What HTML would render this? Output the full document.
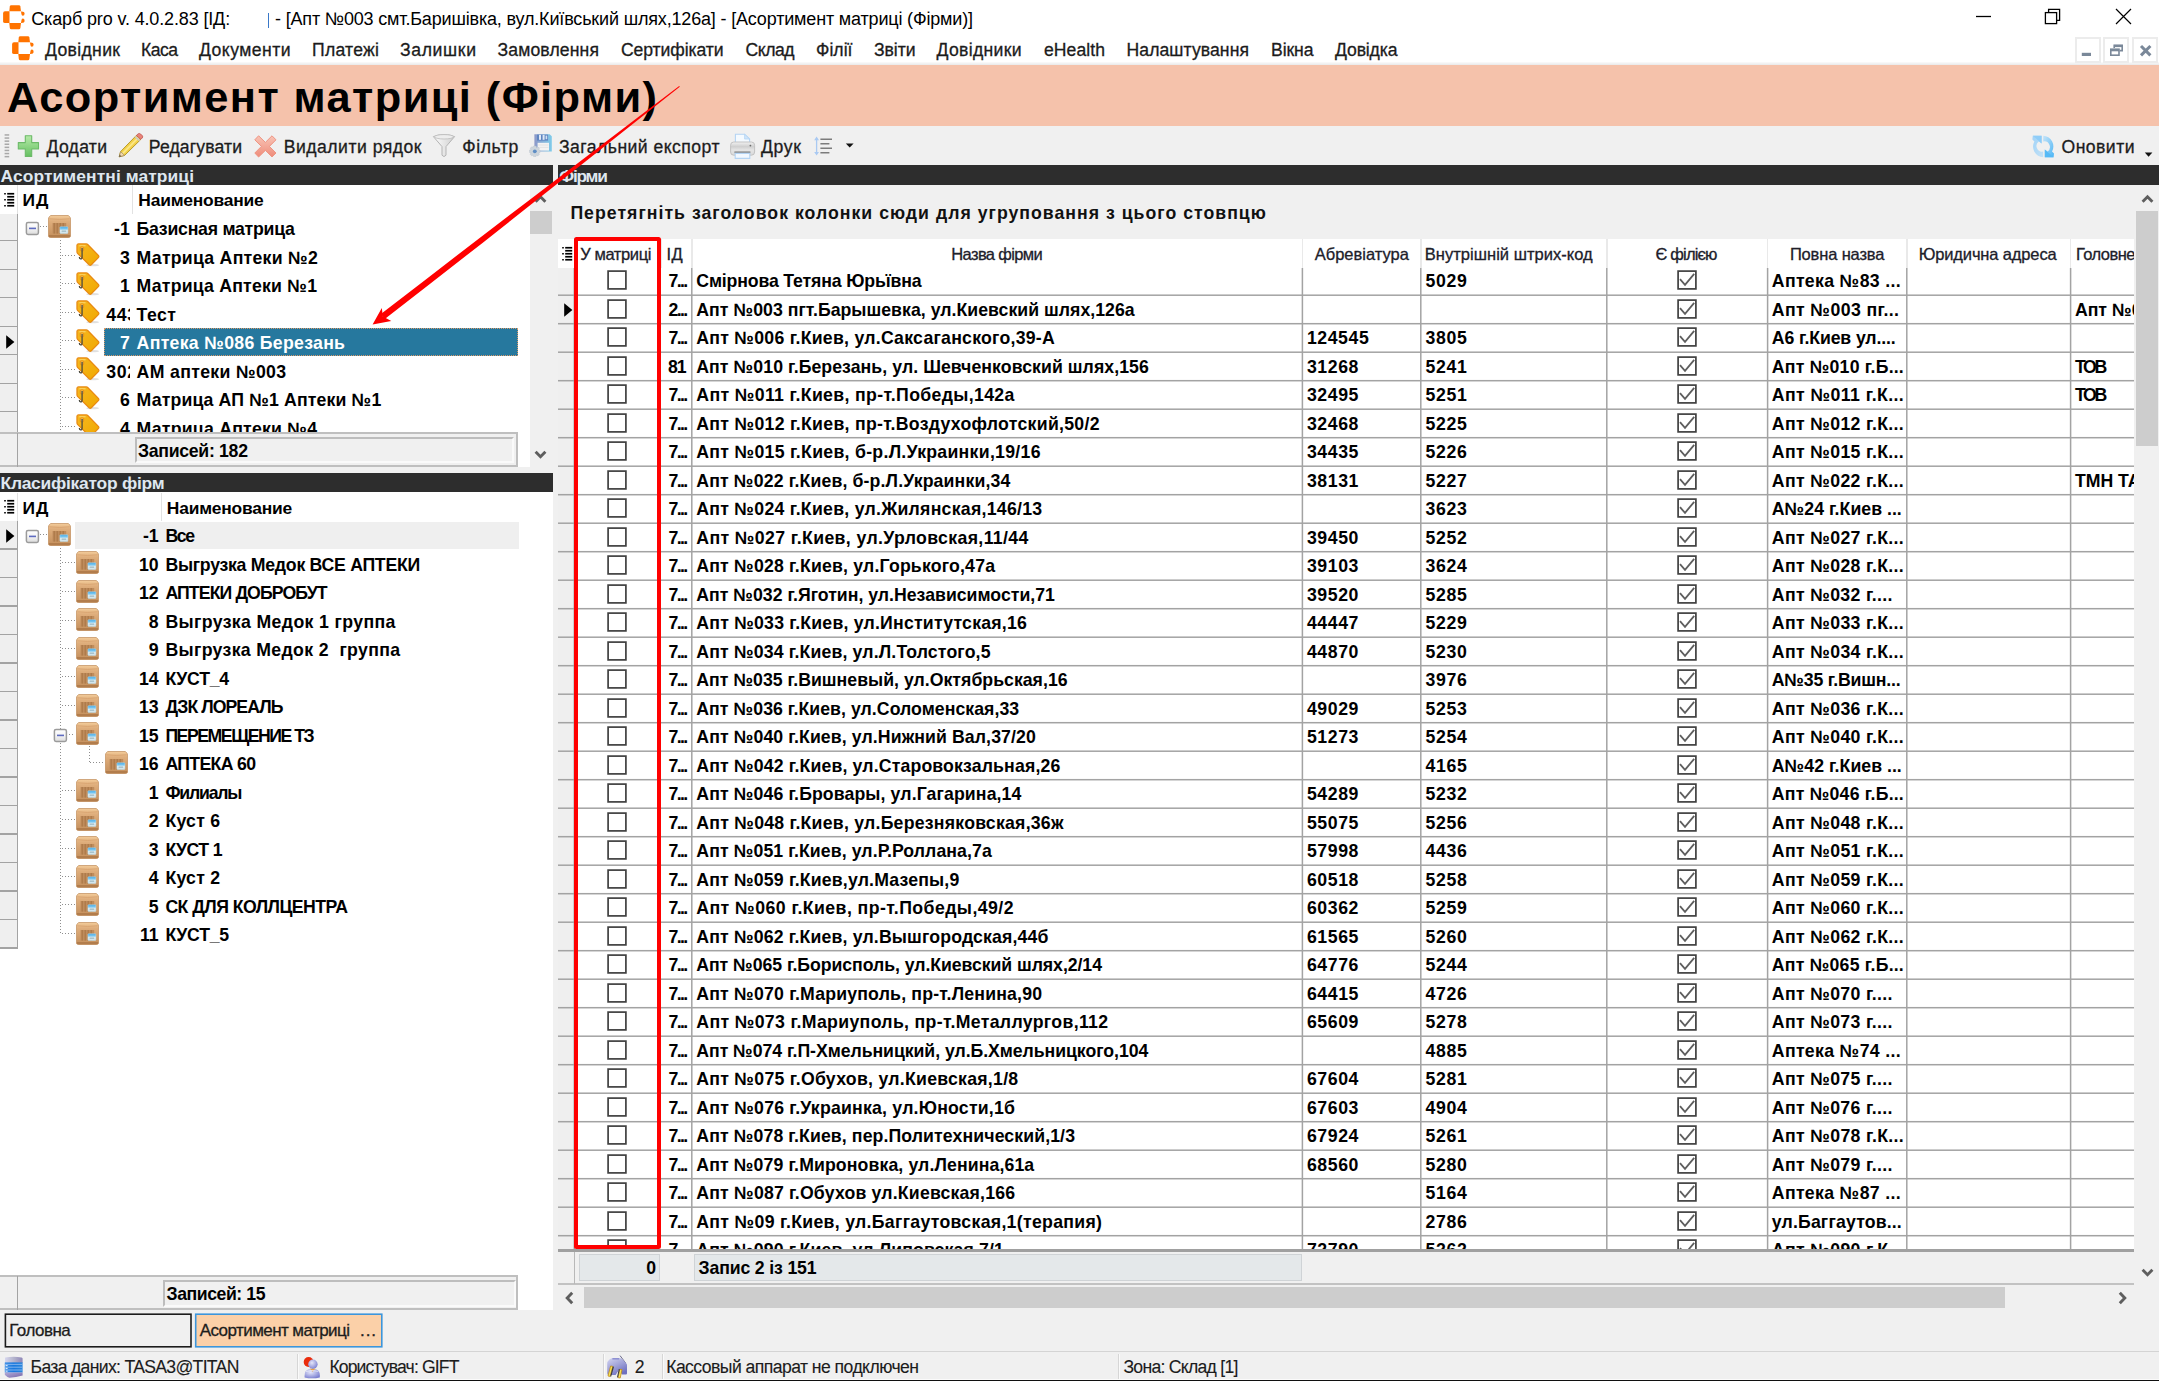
<!DOCTYPE html>
<html><head><meta charset="utf-8"><title>Скарб pro</title><style>
html,body{margin:0;padding:0;}
body{width:2159px;height:1381px;position:relative;overflow:hidden;background:#f0f0f0;font-family:"Liberation Sans",sans-serif;}
div,span,svg{position:absolute;box-sizing:border-box;}
span{white-space:pre;}
</style></head><body>
<div style="left:0.00px;top:0.00px;width:2159.00px;height:36.00px;background:#fff;"></div>
<svg style="left:3.1px;top:4.5px" width="22" height="25" viewBox="0 0 22 25"><g fill="#ff7300"><path d="M8.2 0.3 H15.9 Q17.2 0.3 17.4 1.6 L18 6.3 H6.3 L6.8 1.6 Q7 0.3 8.2 0.3 Z"/><path d="M2 6.3 H6.5 V18.1 H2 Q0.1 18.1 0.1 16.2 V8.2 Q0.1 6.3 2 6.3 Z"/><path d="M6.3 18.1 H18 L17.4 22.9 Q17.2 24.3 15.9 24.3 H8.2 Q7 24.3 6.8 22.9 Z"/><path d="M18 6.4 Q21.6 6.2 21.6 8.6 Q21.6 10.8 19.8 10.8 Q18.6 10.6 18.4 9 Z"/><path d="M18 18 Q21.6 18.2 21.6 15.8 Q21.6 13.6 19.8 13.6 Q18.6 13.8 18.4 15.4 Z"/></g></svg>
<span style="top:10.00px;font-size:18px;line-height:18px;color:#000;letter-spacing:-0.142px;left:31.20px;">Скарб pro v. 4.0.2.83 [ІД:</span>
<div style="left:268.00px;top:13.00px;width:1.20px;height:15.00px;background:#3a78c8;"></div>
<span style="top:10.00px;font-size:18px;line-height:18px;color:#000;letter-spacing:-0.171px;left:275.00px;">- [Апт №003 смт.Баришівка, вул.Київський шлях,126а] - [Асортимент матриці (Фірми)]</span>
<svg style="left:1970px;top:4px" width="170" height="26" viewBox="1970 4 170 26" fill="none" stroke="#000" stroke-width="1.3"><path d="M1976 16.5 H1991"/><path d="M2048.6 12.4 V9.4 H2059.6 V20.4 H2056.8"/><rect x="2045.4" y="12.6" width="11.2" height="11"/><path d="M2116 9 L2131 24 M2131 9 L2116 24" stroke-width="1.2"/></svg>
<div style="left:0.00px;top:36.00px;width:2159.00px;height:26.00px;background:#fff;"></div>
<div style="left:0.00px;top:61.50px;width:2159.00px;height:3.50px;background:linear-gradient(#fbfbfb,#e9e9e9);"></div>
<svg style="left:11.7px;top:36.1px" width="22" height="25" viewBox="0 0 22 25"><g fill="#ff7300"><path d="M8.2 0.3 H15.9 Q17.2 0.3 17.4 1.6 L18 6.3 H6.3 L6.8 1.6 Q7 0.3 8.2 0.3 Z"/><path d="M2 6.3 H6.5 V18.1 H2 Q0.1 18.1 0.1 16.2 V8.2 Q0.1 6.3 2 6.3 Z"/><path d="M6.3 18.1 H18 L17.4 22.9 Q17.2 24.3 15.9 24.3 H8.2 Q7 24.3 6.8 22.9 Z"/><path d="M18 6.4 Q21.6 6.2 21.6 8.6 Q21.6 10.8 19.8 10.8 Q18.6 10.6 18.4 9 Z"/><path d="M18 18 Q21.6 18.2 21.6 15.8 Q21.6 13.6 19.8 13.6 Q18.6 13.8 18.4 15.4 Z"/></g></svg>
<span style="top:42.00px;font-size:17.6px;line-height:17.6px;color:#1c1c1c;-webkit-text-stroke:0.3px #1c1c1c;letter-spacing:0.333px;left:45.00px;">Довідник</span>
<span style="top:42.00px;font-size:17.6px;line-height:17.6px;color:#1c1c1c;-webkit-text-stroke:0.3px #1c1c1c;letter-spacing:-0.542px;left:141.00px;">Каса</span>
<span style="top:42.00px;font-size:17.6px;line-height:17.6px;color:#1c1c1c;-webkit-text-stroke:0.3px #1c1c1c;letter-spacing:0.453px;left:199.00px;">Документи</span>
<span style="top:42.00px;font-size:17.6px;line-height:17.6px;color:#1c1c1c;-webkit-text-stroke:0.3px #1c1c1c;letter-spacing:0.260px;left:312.00px;">Платежі</span>
<span style="top:42.00px;font-size:17.6px;line-height:17.6px;color:#1c1c1c;-webkit-text-stroke:0.3px #1c1c1c;letter-spacing:0.641px;left:400.00px;">Залишки</span>
<span style="top:42.00px;font-size:17.6px;line-height:17.6px;color:#1c1c1c;-webkit-text-stroke:0.3px #1c1c1c;letter-spacing:0.139px;left:497.50px;">Замовлення</span>
<span style="top:42.00px;font-size:17.6px;line-height:17.6px;color:#1c1c1c;-webkit-text-stroke:0.3px #1c1c1c;letter-spacing:-0.103px;left:621.00px;">Сертифікати</span>
<span style="top:42.00px;font-size:17.6px;line-height:17.6px;color:#1c1c1c;-webkit-text-stroke:0.3px #1c1c1c;letter-spacing:-0.480px;left:745.50px;">Склад</span>
<span style="top:42.00px;font-size:17.6px;line-height:17.6px;color:#1c1c1c;-webkit-text-stroke:0.3px #1c1c1c;letter-spacing:0.035px;left:816.00px;">Філії</span>
<span style="top:42.00px;font-size:17.6px;line-height:17.6px;color:#1c1c1c;-webkit-text-stroke:0.3px #1c1c1c;letter-spacing:-0.070px;left:874.00px;">Звіти</span>
<span style="top:42.00px;font-size:17.6px;line-height:17.6px;color:#1c1c1c;-webkit-text-stroke:0.3px #1c1c1c;letter-spacing:0.312px;left:936.50px;">Довідники</span>
<span style="top:42.00px;font-size:17.6px;line-height:17.6px;color:#1c1c1c;-webkit-text-stroke:0.3px #1c1c1c;letter-spacing:0.057px;left:1044.00px;">eHealth</span>
<span style="top:42.00px;font-size:17.6px;line-height:17.6px;color:#1c1c1c;-webkit-text-stroke:0.3px #1c1c1c;letter-spacing:0.081px;left:1126.50px;">Налаштування</span>
<span style="top:42.00px;font-size:17.6px;line-height:17.6px;color:#1c1c1c;-webkit-text-stroke:0.3px #1c1c1c;letter-spacing:-0.086px;left:1271.00px;">Вікна</span>
<span style="top:42.00px;font-size:17.6px;line-height:17.6px;color:#1c1c1c;-webkit-text-stroke:0.3px #1c1c1c;letter-spacing:-0.133px;left:1335.00px;">Довідка</span>
<div style="left:2074.70px;top:37.00px;width:26.00px;height:26.00px;background:#fff;border:2px solid #ececec;"></div>
<div style="left:2103.20px;top:37.00px;width:26.00px;height:26.00px;background:#fff;border:2px solid #ececec;"></div>
<div style="left:2131.70px;top:37.00px;width:26.00px;height:26.00px;background:#fff;border:2px solid #ececec;"></div>
<svg style="left:2074px;top:36px" width="85" height="28" viewBox="2074 36 85 28"><rect x="2081.8" y="52.8" width="9.2" height="3.2" fill="#7a8899"/><g fill="none" stroke="#7a8899" stroke-width="1.6"><path d="M2114.2 48 V45.2 H2122.2 V50.6 H2119.8"/><path d="M2114 46 H2122.4" stroke-width="2.2"/><rect x="2110.8" y="49.2" width="8.2" height="6"/><path d="M2110.6 50.2 H2119.2" stroke-width="2.2"/></g><path d="M2141 46 L2150.4 55.4 M2150.4 46 L2141 55.4" stroke="#7a8899" stroke-width="3" fill="none"/></svg>
<div style="left:0.00px;top:65.00px;width:2159.00px;height:61.30px;background:#f5c2ab;"></div>
<span style="top:76.00px;font-size:43.4px;line-height:43.4px;color:#000;font-weight:bold;letter-spacing:1.417px;left:7.00px;">Асортимент матриці (Фірми)</span>
<div style="left:0.00px;top:126.30px;width:2159.00px;height:39.00px;background:#f0f0f0;"></div>
<svg style="left:4px;top:133px" width="7" height="26" viewBox="0 0 7 26" fill="#a8a8a8"><rect x="0.6" y="1.20" width="4.6" height="1.5"/><rect x="0.6" y="4.30" width="4.6" height="1.5"/><rect x="0.6" y="7.40" width="4.6" height="1.5"/><rect x="0.6" y="10.50" width="4.6" height="1.5"/><rect x="0.6" y="13.60" width="4.6" height="1.5"/><rect x="0.6" y="16.70" width="4.6" height="1.5"/><rect x="0.6" y="19.80" width="4.6" height="1.5"/><rect x="0.6" y="22.90" width="4.6" height="1.5"/></svg>
<span style="top:139.00px;font-size:17.6px;line-height:17.6px;color:#1c1c1c;-webkit-text-stroke:0.3px #1c1c1c;letter-spacing:0.287px;left:46.50px;">Додати</span>
<span style="top:139.00px;font-size:17.6px;line-height:17.6px;color:#1c1c1c;-webkit-text-stroke:0.3px #1c1c1c;letter-spacing:0.126px;left:148.80px;">Редагувати</span>
<span style="top:139.00px;font-size:17.6px;line-height:17.6px;color:#1c1c1c;-webkit-text-stroke:0.3px #1c1c1c;letter-spacing:0.497px;left:283.70px;">Видалити рядок</span>
<span style="top:139.00px;font-size:17.6px;line-height:17.6px;color:#1c1c1c;-webkit-text-stroke:0.3px #1c1c1c;letter-spacing:0.562px;left:462.30px;">Фільтр</span>
<span style="top:139.00px;font-size:17.6px;line-height:17.6px;color:#1c1c1c;-webkit-text-stroke:0.3px #1c1c1c;letter-spacing:0.458px;left:559.00px;">Загальний експорт</span>
<span style="top:139.00px;font-size:17.6px;line-height:17.6px;color:#1c1c1c;-webkit-text-stroke:0.3px #1c1c1c;letter-spacing:0.667px;left:761.00px;">Друк</span>
<span style="top:139.00px;font-size:17.6px;line-height:17.6px;color:#1c1c1c;-webkit-text-stroke:0.3px #1c1c1c;letter-spacing:0.458px;left:2061.50px;">Оновити</span>
<svg style="left:17px;top:134px" width="24" height="24" viewBox="0 0 24 24"><defs><linearGradient id="gp" x1="0" y1="0" x2="0" y2="1"><stop offset="0" stop-color="#b6eaa8"/><stop offset="1" stop-color="#66c062"/></linearGradient></defs><path d="M8.3 1.8 H14.7 V8.6 H21.5 V15 H14.7 V22.4 H8.3 V15 H1.3 V8.6 H8.3 Z" fill="url(#gp)" stroke="#6cba68" stroke-width="1.1" stroke-linejoin="round"/></svg>
<svg style="left:117px;top:132px" width="28" height="28" viewBox="0 0 28 28"><path d="M2.2 24.8 L3.6 19.6 L19.4 3.4 L23.8 7.4 L7.6 23.4 Z" fill="#f3d24a" stroke="#b89a2a" stroke-width="1"/><path d="M5.5 21.6 L21.6 5.4" stroke="#fbe88a" stroke-width="1.6"/><path d="M19.4 3.4 L21.2 1.8 Q22.4 1 23.6 2 L25.4 3.8 Q26.2 5 25.2 6 L23.8 7.4 Z" fill="#e9837a" stroke="#c0554e" stroke-width="0.8"/><path d="M18.2 4.6 L22.6 8.6" stroke="#c9c9c9" stroke-width="1.6"/><path d="M2.2 24.8 L3.6 19.6 L7.6 23.4 Z" fill="#f2d9b0" stroke="#a08858" stroke-width="0.7"/><path d="M2.2 24.8 L2.8 22.8 L4.2 24.2 Z" fill="#444"/></svg>
<svg style="left:253px;top:134px" width="25" height="25" viewBox="0 0 25 25"><defs><linearGradient id="gx" x1="0" y1="0" x2="0" y2="1"><stop offset="0" stop-color="#f9c4b6"/><stop offset="1" stop-color="#ee8c7a"/></linearGradient></defs><path d="M5.6 1.8 L12.4 8.4 L19 1.8 L23 5.8 L16.4 12.4 L23 19 L19 23 L12.4 16.4 L5.6 23 L1.8 19 L8.4 12.4 L1.8 5.8 Z" fill="url(#gx)" stroke="#ee9482" stroke-width="1" stroke-linejoin="round"/></svg>
<svg style="left:432px;top:133px" width="24" height="26" viewBox="0 0 24 26"><defs><linearGradient id="gf" x1="0" y1="0" x2="1" y2="0"><stop offset="0" stop-color="#fdfdfd"/><stop offset="1" stop-color="#cfcfcf"/></linearGradient></defs><path d="M1.4 3.6 Q12 -0.6 22.6 3.6 L14 13.6 V22.2 Q12 25 10 22.2 V13.6 Z" fill="url(#gf)" stroke="#b4b4b4" stroke-width="1"/><ellipse cx="12" cy="3.8" rx="9.6" ry="2.2" fill="#ededed" stroke="#bdbdbd" stroke-width="0.8"/></svg>
<svg style="left:529px;top:133px" width="25" height="26" viewBox="0 0 25 26"><defs><linearGradient id="fl1" x1="0" y1="0" x2="1" y2="0"><stop offset="0" stop-color="#8c98c8"/><stop offset="1" stop-color="#7fcbea"/></linearGradient></defs><path d="M5.4 1.2 H20.6 L22.8 3.2 V18.6 H5.4 Z" fill="url(#fl1)"/><rect x="8" y="1.6" width="11" height="6" fill="#5f84c0"/><rect x="10" y="1.8" width="2" height="5" fill="#dfe9f6"/><rect x="13.6" y="1.8" width="2" height="5" fill="#dfe9f6"/><rect x="16.6" y="2.6" width="1.6" height="3.6" fill="#cfe0f2"/><rect x="8.6" y="9.8" width="11.4" height="7.8" fill="#f3f3f3"/><path d="M9 12 H19.4 M9 14.4 H19.4" stroke="#dedede" stroke-width="0.8"/><g transform="translate(5.8 18.3)"><path d="M-1.3 -5.2 H1.3 L1.7 -3.6 L3.1 -4.4 L4.6 -2.9 L3.7 -1.6 L5.2 -1.2 V1.3 L3.7 1.7 L4.5 3.1 L3 4.6 L1.6 3.7 L1.2 5.2 H-1.3 L-1.7 3.7 L-3.1 4.5 L-4.6 3 L-3.7 1.6 L-5.2 1.2 V-1.3 L-3.7 -1.7 L-4.5 -3.1 L-3 -4.6 L-1.6 -3.7 Z" fill="#cdd5dc" stroke="#b8c2cc" stroke-width="0.5"/><circle r="1.9" fill="#5f8ec4"/></g></svg>
<svg style="left:729px;top:133px" width="27" height="27" viewBox="0 0 27 27"><defs><linearGradient id="pr1" x1="0" y1="0" x2="0" y2="1"><stop offset="0" stop-color="#f2f2f2"/><stop offset="0.35" stop-color="#cfcfcf"/><stop offset="0.6" stop-color="#e4e4e4"/><stop offset="1" stop-color="#dadada"/></linearGradient></defs><path d="M6.4 1.2 H15.6 L20.6 6 V11 H6.4 Z" fill="#f4faff" stroke="#b4d4f4" stroke-width="1.1"/><path d="M15.6 1.2 V6 H20.6 Z" fill="#cfe4fa" stroke="#b4d4f4" stroke-width="0.8"/><rect x="1.6" y="9" width="24" height="13.2" rx="3.2" fill="url(#pr1)" stroke="#c2c2c2" stroke-width="1"/><rect x="5.4" y="18.4" width="16" height="1.8" fill="#8a8a8a"/><circle cx="21.4" cy="12.6" r="0.9" fill="#6c6c6c"/><path d="M6.2 20.4 H20.8 V25.4 H6.2 Z" fill="#f2f8ff" stroke="#b4d4f4" stroke-width="1.1"/></svg>
<svg style="left:812px;top:135px" width="22" height="22" viewBox="0 0 22 22"><path d="M4.6 3 V19" stroke="#a9c9f2" stroke-width="1.3" fill="none"/><path d="M2.2 5.2 L4.6 1.6 L7 5.2 Z M2.2 17 L4.6 20.6 L7 17 Z" fill="#a9c9f2"/><path d="M8.4 4.2 H20 M8.4 8.7 H17.4 M8.4 13.2 H20 M8.4 17.7 H17.4" stroke="#7c7c7c" stroke-width="1.6" fill="none"/></svg>
<svg style="left:845px;top:143px" width="10" height="6" viewBox="0 0 10 6"><path d="M0.8 0.4 H8.6 L4.7 4.6 Z" fill="#111"/></svg>
<svg style="left:2031px;top:133.5px" width="25" height="25" viewBox="0 0 25 25"><defs><linearGradient id="rf1" x1="0" y1="0" x2="1" y2="1"><stop offset="0" stop-color="#9fd2f8"/><stop offset="1" stop-color="#c4e2f6"/></linearGradient><linearGradient id="rf2" x1="0" y1="0" x2="1" y2="1"><stop offset="0" stop-color="#c6e4f8"/><stop offset="1" stop-color="#4db6f6"/></linearGradient></defs><path d="M12.2 23.2 A10.6 10.6 0 0 1 3.4 7.4 L1.4 5.4 L1.8 1.8 H10.6 V9.6 L7.8 7.6 A5.6 5.6 0 0 0 12.2 17.6 Z" fill="url(#rf1)"/><path d="M12.2 1.8 A10.6 10.6 0 0 1 21 17.6 L23 19.6 L22.6 23.2 H13.8 V15.4 L16.6 17.4 A5.6 5.6 0 0 0 12.2 7.4 Z" fill="url(#rf2)"/><path d="M1.8 1.8 H10.6 V9.6 Z" fill="#8fcdf8"/><path d="M22.6 23.2 H13.8 V15.4 Z" fill="#56baf6"/></svg>
<svg style="left:2144px;top:151.5px" width="10" height="6" viewBox="0 0 10 6"><path d="M0.8 0.6 H8.4 L4.6 4.8 Z" fill="#111"/></svg>
<div style="left:0.00px;top:165.30px;width:553.30px;height:19.50px;background:#2d2d2d;"></div>
<div style="left:558.20px;top:165.30px;width:1600.80px;height:19.50px;background:#2d2d2d;"></div>
<span style="top:168.00px;font-size:17.4px;line-height:17.4px;color:#dfe7f0;font-weight:bold;letter-spacing:0.099px;left:0.50px;">Асортиментні матриці</span>
<span style="top:168.00px;font-size:17.4px;line-height:17.4px;color:#dfe7f0;font-weight:bold;letter-spacing:-1.256px;left:559.30px;">Фірми</span>
<div style="left:0.00px;top:473.30px;width:553.30px;height:19.00px;background:#2d2d2d;"></div>
<span style="top:475.00px;font-size:17.4px;line-height:17.4px;color:#dfe7f0;font-weight:bold;letter-spacing:-0.237px;left:0.50px;">Класифікатор фірм</span>
<svg width="0" height="0" style="left:0;top:0"><defs><linearGradient id="cr1" x1="0" y1="0" x2="0" y2="1"><stop offset="0" stop-color="#f3cc9a"/><stop offset="0.25" stop-color="#dfae7c"/><stop offset="1" stop-color="#c48f5c"/></linearGradient><linearGradient id="cr2" x1="0" y1="0" x2="0" y2="1"><stop offset="0" stop-color="#3aa8ea"/><stop offset="0.4" stop-color="#8fd0f2"/><stop offset="0.45" stop-color="#e6f1f5"/><stop offset="1" stop-color="#cfe2e8"/></linearGradient><linearGradient id="tg1" x1="0" y1="0" x2="1" y2="1"><stop offset="0" stop-color="#f6b820"/><stop offset="1" stop-color="#f0a800"/></linearGradient><linearGradient id="eb1" x1="0" y1="0" x2="0" y2="1"><stop offset="0" stop-color="#ffffff"/><stop offset="0.5" stop-color="#f4f4f4"/><stop offset="1" stop-color="#dcdcdc"/></linearGradient><symbol id="crate" viewBox="0 0 23 23"><path d="M2.6 0.5 H20.4 Q22.6 2.2 22.6 4 V20.6 Q22.6 22.5 20.6 22.5 H2.4 Q0.4 22.5 0.4 20.6 V4 Q0.4 2.2 2.6 0.5 Z" fill="url(#cr1)" stroke="#c08c5a" stroke-width="0.7"/><path d="M0.8 20 H22.2 V21.6 Q22 22.3 20.6 22.3 H2.4 Q1 22.3 0.8 21.6 Z" fill="#b27d4c"/><path d="M1.4 3.8 Q11.5 5 21.6 3.8" stroke="#d6a06c" stroke-width="0.8" fill="none"/><rect x="4.6" y="8" width="13.6" height="10.6" fill="#bf8c5c"/><path d="M6.2 8 V18.6 M9.2 8 V18.6 M12.2 8 V18.6 M15.2 8 V18.6" stroke="#a97644" stroke-width="1"/><rect x="11.9" y="11.8" width="8" height="6.6" rx="0.6" fill="url(#cr2)" stroke="#bfe0ee" stroke-width="0.5"/><rect x="13.6" y="15.4" width="4.6" height="1.6" fill="#a9c3cc"/></symbol><symbol id="tag" viewBox="0 0 25 25"><path d="M4.4 24.2 H22 " stroke="#d8d8d8" stroke-width="1.6" opacity="0"/><ellipse cx="17" cy="22.6" rx="6.5" ry="1.2" fill="#000" opacity="0.12"/><path d="M2.6 1 H10.4 Q11.4 1 12.2 1.8 L22.8 12.6 Q23.8 13.8 22.8 14.9 L15.6 22.2 Q14.5 23.2 13.4 22.2 L1.8 10.8 Q1 10 1 9 V2.6 Q1 1 2.6 1 Z" fill="url(#tg1)" stroke="#e98a12" stroke-width="1.3"/><path d="M3.4 2.8 H9.8" stroke="#fbd873" stroke-width="1.2"/><rect x="4.4" y="4" width="3.4" height="4" rx="0.8" fill="#f5c04a" stroke="#e58a16" stroke-width="0.9"/><path d="M6.2 5.2 V14.6 Q6.2 16.4 4.6 16.2 Q3.4 16 3.4 14.4" fill="none" stroke="#4a4a40" stroke-width="1.3"/></symbol><symbol id="ebox" viewBox="0 0 15 15"><rect x="1.4" y="1.4" width="12" height="12" rx="1.6" fill="url(#eb1)" stroke="#9b9b9b" stroke-width="1.5"/><rect x="4" y="6.6" width="7" height="1.6" fill="#5f6cc0"/></symbol><symbol id="cb0" viewBox="0 0 20 20"><rect x="1.1" y="1.1" width="17.8" height="17.8" fill="#fff" stroke="#404040" stroke-width="1.7"/></symbol><symbol id="cb1" viewBox="0 0 20 20"><rect x="1.1" y="1.1" width="17.8" height="17.8" fill="#fff" stroke="#404040" stroke-width="1.7"/><path d="M3 9.2 L8 14.8 L17.2 3.8" fill="none" stroke="#5e5e5e" stroke-width="1.8"/></symbol><symbol id="hicon" viewBox="0 0 11 16"><g fill="#000"><rect x="0.2" y="1" width="1.6" height="1.5"/><rect x="0.2" y="7" width="1.6" height="1.5"/><rect x="0.2" y="13" width="1.6" height="1.5"/><rect x="3.2" y="0.9" width="7" height="1.7"/><rect x="3.2" y="3.9" width="7" height="1.7"/><rect x="3.2" y="6.9" width="7" height="1.7"/><rect x="3.2" y="9.9" width="7" height="1.7"/><rect x="3.2" y="12.9" width="7" height="1.7"/></g></symbol></defs></svg>
<div style="left:0.00px;top:184.80px;width:530.00px;height:282.40px;background:#fff;"></div>
<svg style="left:4.00px;top:191.50px" width="11" height="16"><use href="#hicon" width="11" height="16"/></svg>
<div style="left:17.00px;top:185.00px;width:1.00px;height:28.50px;background:#e2e2e2;"></div>
<div style="left:132.00px;top:185.00px;width:1.20px;height:28.50px;background:#e2e2e2;"></div>
<span style="top:192.00px;font-size:17.4px;line-height:17.4px;color:#000;font-weight:bold;letter-spacing:1.109px;left:22.40px;">ИД</span>
<span style="top:192.00px;font-size:17.4px;line-height:17.4px;color:#000;font-weight:bold;letter-spacing:-0.190px;left:138.30px;">Наименование</span>
<div style="left:0.00px;top:213.80px;width:17.40px;height:219.00px;background:#efefef;"></div>
<div style="left:17.00px;top:213.50px;width:1.40px;height:219.50px;background:#a3a3a3;"></div>
<div style="left:0.00px;top:240.10px;width:17.40px;height:1.40px;background:#a3a3a3;"></div>
<div style="left:0.00px;top:268.60px;width:17.40px;height:1.40px;background:#a3a3a3;"></div>
<div style="left:0.00px;top:297.10px;width:17.40px;height:1.40px;background:#a3a3a3;"></div>
<div style="left:0.00px;top:325.60px;width:17.40px;height:1.40px;background:#a3a3a3;"></div>
<div style="left:0.00px;top:354.10px;width:17.40px;height:1.40px;background:#a3a3a3;"></div>
<div style="left:0.00px;top:382.60px;width:17.40px;height:1.40px;background:#a3a3a3;"></div>
<div style="left:0.00px;top:411.10px;width:17.40px;height:1.40px;background:#a3a3a3;"></div>
<div style="left:0;top:213.5px;width:530px;height:219px;overflow:hidden">
<div style="left:60.00px;top:26.50px;width:1.00px;height:193.00px;background:repeating-linear-gradient(180deg,#8e8e8e 0,#8e8e8e 1.2px,transparent 1.2px,transparent 3px);"></div>
<svg style="left:24.90px;top:7.10px" width="15" height="15"><use href="#ebox" width="15" height="15"/></svg>
<div style="left:40.00px;top:12.00px;width:7.50px;height:1.00px;background:repeating-linear-gradient(90deg,#8e8e8e 0,#8e8e8e 1.2px,transparent 1.2px,transparent 3px);"></div>
<svg style="left:47.80px;top:1.30px" width="23" height="23"><use href="#crate" width="23" height="23"/></svg>
<span style="top:7.00px;font-size:17.7px;line-height:17.7px;color:#000;font-weight:bold;left:-270.20px;width:400px;text-align:right;">-1</span>
<span style="top:7.00px;font-size:17.7px;line-height:17.7px;color:#000;font-weight:bold;letter-spacing:-0.246px;left:136.60px;">Базисная матрица</span>
<div style="left:62.00px;top:41.00px;width:13.50px;height:1.00px;background:repeating-linear-gradient(90deg,#8e8e8e 0,#8e8e8e 1.2px,transparent 1.2px,transparent 3px);"></div>
<svg style="left:75.50px;top:29.80px" width="24.5" height="24.5"><use href="#tag" width="24.5" height="24.5"/></svg>
<span style="top:36.00px;font-size:17.7px;line-height:17.7px;color:#000;font-weight:bold;left:-270.20px;width:400px;text-align:right;">3</span>
<span style="top:36.00px;font-size:17.7px;line-height:17.7px;color:#000;font-weight:bold;letter-spacing:0.255px;left:136.60px;">Матрица Аптеки №2</span>
<div style="left:62.00px;top:69.00px;width:13.50px;height:1.00px;background:repeating-linear-gradient(90deg,#8e8e8e 0,#8e8e8e 1.2px,transparent 1.2px,transparent 3px);"></div>
<svg style="left:75.50px;top:58.30px" width="24.5" height="24.5"><use href="#tag" width="24.5" height="24.5"/></svg>
<span style="top:64.00px;font-size:17.7px;line-height:17.7px;color:#000;font-weight:bold;left:-270.20px;width:400px;text-align:right;">1</span>
<span style="top:64.00px;font-size:17.7px;line-height:17.7px;color:#000;font-weight:bold;letter-spacing:0.205px;left:136.60px;">Матрица Аптеки №1</span>
<div style="left:62.00px;top:98.00px;width:13.50px;height:1.00px;background:repeating-linear-gradient(90deg,#8e8e8e 0,#8e8e8e 1.2px,transparent 1.2px,transparent 3px);"></div>
<svg style="left:75.50px;top:86.80px" width="24.5" height="24.5"><use href="#tag" width="24.5" height="24.5"/></svg>
<span style="top:93.00px;font-size:17.7px;line-height:17.7px;color:#000;font-weight:bold;letter-spacing:0.600px;left:106.30px;width:24.00px;overflow:hidden;">443</span>
<span style="top:93.00px;font-size:17.7px;line-height:17.7px;color:#000;font-weight:bold;letter-spacing:0.423px;left:136.60px;">Тест</span>
<div style="left:103.50px;top:114.00px;width:414.00px;height:28.20px;background:#26789e;border:1px dotted #d89a6a;"></div>
<div style="left:62.00px;top:126.00px;width:13.50px;height:1.00px;background:repeating-linear-gradient(90deg,#8e8e8e 0,#8e8e8e 1.2px,transparent 1.2px,transparent 3px);"></div>
<svg style="left:75.50px;top:115.30px" width="24.5" height="24.5"><use href="#tag" width="24.5" height="24.5"/></svg>
<span style="top:121.00px;font-size:17.7px;line-height:17.7px;color:#fff;font-weight:bold;left:-270.20px;width:400px;text-align:right;">7</span>
<span style="top:121.00px;font-size:17.7px;line-height:17.7px;color:#fff;font-weight:bold;letter-spacing:0.292px;left:136.60px;">Аптека №086 Березань</span>
<div style="left:62.00px;top:155.00px;width:13.50px;height:1.00px;background:repeating-linear-gradient(90deg,#8e8e8e 0,#8e8e8e 1.2px,transparent 1.2px,transparent 3px);"></div>
<svg style="left:75.50px;top:143.80px" width="24.5" height="24.5"><use href="#tag" width="24.5" height="24.5"/></svg>
<span style="top:150.00px;font-size:17.7px;line-height:17.7px;color:#000;font-weight:bold;letter-spacing:0.600px;left:106.30px;width:24.00px;overflow:hidden;">302</span>
<span style="top:150.00px;font-size:17.7px;line-height:17.7px;color:#000;font-weight:bold;letter-spacing:0.322px;left:136.60px;">АМ аптеки №003</span>
<div style="left:62.00px;top:183.00px;width:13.50px;height:1.00px;background:repeating-linear-gradient(90deg,#8e8e8e 0,#8e8e8e 1.2px,transparent 1.2px,transparent 3px);"></div>
<svg style="left:75.50px;top:172.30px" width="24.5" height="24.5"><use href="#tag" width="24.5" height="24.5"/></svg>
<span style="top:178.00px;font-size:17.7px;line-height:17.7px;color:#000;font-weight:bold;left:-270.20px;width:400px;text-align:right;">6</span>
<span style="top:178.00px;font-size:17.7px;line-height:17.7px;color:#000;font-weight:bold;letter-spacing:0.133px;left:136.60px;">Матрица АП №1 Аптеки №1</span>
<div style="left:62.00px;top:212.00px;width:13.50px;height:1.00px;background:repeating-linear-gradient(90deg,#8e8e8e 0,#8e8e8e 1.2px,transparent 1.2px,transparent 3px);"></div>
<svg style="left:75.50px;top:200.80px" width="24.5" height="24.5"><use href="#tag" width="24.5" height="24.5"/></svg>
<span style="top:207.00px;font-size:17.7px;line-height:17.7px;color:#000;font-weight:bold;left:-270.20px;width:400px;text-align:right;">4</span>
<span style="top:207.00px;font-size:17.7px;line-height:17.7px;color:#000;font-weight:bold;letter-spacing:0.205px;left:136.60px;">Матрица Аптеки №4</span>
</div>
<svg style="left:5.80px;top:334.50px" width="9" height="14" viewBox="0 0 9 14"><path d="M0.2 0.2 L8.4 7 L0.2 13.8 Z" fill="#000"/></svg>
<div style="left:0.00px;top:432.20px;width:518.00px;height:35.20px;background:#f0f0f0;border:2px solid #bfbfbf;border-left:none;"></div>
<div style="left:17.00px;top:433.00px;width:1.40px;height:34.00px;background:#a3a3a3;"></div>
<div style="left:134.60px;top:436.80px;width:379.60px;height:26.20px;background:#f0f0f0;border:2px solid #bdbdbd;border-right-color:#fafafa;border-bottom-color:#fafafa;"></div>
<span style="top:443.00px;font-size:17.7px;line-height:17.7px;color:#000;font-weight:bold;letter-spacing:-0.304px;left:138.00px;">Записей: 182</span>
<div style="left:529.80px;top:184.80px;width:23.50px;height:282.40px;background:#f0f0f0;"></div>
<div style="left:530.20px;top:210.80px;width:21.80px;height:23.40px;background:#cdcdcd;"></div>
<svg style="left:534.40px;top:194.40px" width="13" height="10" viewBox="0 0 13 10"><path d="M1.6 7.8 L6.5 2.8 L11.4 7.8" fill="none" stroke="#5e5e5e" stroke-width="2.9"/></svg>
<svg style="left:534.40px;top:449.80px" width="13" height="10" viewBox="0 0 13 10"><path d="M1.6 1.8 L6.5 6.8 L11.4 1.8" fill="none" stroke="#5e5e5e" stroke-width="2.9"/></svg>
<div style="left:0.00px;top:492.30px;width:553.30px;height:817.50px;background:#fff;"></div>
<svg style="left:4.00px;top:498.80px" width="11" height="16"><use href="#hicon" width="11" height="16"/></svg>
<div style="left:17.00px;top:492.50px;width:1.00px;height:28.30px;background:#e2e2e2;"></div>
<div style="left:160.60px;top:492.50px;width:1.20px;height:28.30px;background:#e2e2e2;"></div>
<span style="top:500.00px;font-size:17.4px;line-height:17.4px;color:#000;font-weight:bold;letter-spacing:1.109px;left:22.40px;">ИД</span>
<span style="top:500.00px;font-size:17.4px;line-height:17.4px;color:#000;font-weight:bold;letter-spacing:-0.190px;left:166.80px;">Наименование</span>
<div style="left:0.00px;top:521.00px;width:17.40px;height:427.10px;background:#efefef;"></div>
<div style="left:17.00px;top:520.80px;width:1.40px;height:427.90px;background:#a3a3a3;"></div>
<div style="left:0.00px;top:548.40px;width:17.40px;height:1.40px;background:#a3a3a3;"></div>
<div style="left:0.00px;top:576.90px;width:17.40px;height:1.40px;background:#a3a3a3;"></div>
<div style="left:0.00px;top:605.40px;width:17.40px;height:1.40px;background:#a3a3a3;"></div>
<div style="left:0.00px;top:633.90px;width:17.40px;height:1.40px;background:#a3a3a3;"></div>
<div style="left:0.00px;top:662.40px;width:17.40px;height:1.40px;background:#a3a3a3;"></div>
<div style="left:0.00px;top:690.90px;width:17.40px;height:1.40px;background:#a3a3a3;"></div>
<div style="left:0.00px;top:719.40px;width:17.40px;height:1.40px;background:#a3a3a3;"></div>
<div style="left:0.00px;top:747.90px;width:17.40px;height:1.40px;background:#a3a3a3;"></div>
<div style="left:0.00px;top:776.40px;width:17.40px;height:1.40px;background:#a3a3a3;"></div>
<div style="left:0.00px;top:804.90px;width:17.40px;height:1.40px;background:#a3a3a3;"></div>
<div style="left:0.00px;top:833.40px;width:17.40px;height:1.40px;background:#a3a3a3;"></div>
<div style="left:0.00px;top:861.90px;width:17.40px;height:1.40px;background:#a3a3a3;"></div>
<div style="left:0.00px;top:890.40px;width:17.40px;height:1.40px;background:#a3a3a3;"></div>
<div style="left:0.00px;top:918.90px;width:17.40px;height:1.40px;background:#a3a3a3;"></div>
<div style="left:0.00px;top:947.40px;width:17.40px;height:1.40px;background:#a3a3a3;"></div>
<div style="left:75.30px;top:521.60px;width:443.50px;height:27.80px;background:#efefef;"></div>
<div style="left:60.00px;top:547.50px;width:1.00px;height:387.10px;background:repeating-linear-gradient(180deg,#8e8e8e 0,#8e8e8e 1.2px,transparent 1.2px,transparent 3px);"></div>
<svg style="left:24.90px;top:528.70px" width="15" height="15"><use href="#ebox" width="15" height="15"/></svg>
<div style="left:40.00px;top:534.00px;width:7.50px;height:1.00px;background:repeating-linear-gradient(90deg,#8e8e8e 0,#8e8e8e 1.2px,transparent 1.2px,transparent 3px);"></div>
<svg style="left:47.80px;top:522.50px" width="23" height="23"><use href="#crate" width="23" height="23"/></svg>
<span style="top:528.00px;font-size:17.7px;line-height:17.7px;color:#000;font-weight:bold;left:-241.40px;width:400px;text-align:right;">-1</span>
<span style="top:528.00px;font-size:17.7px;line-height:17.7px;color:#000;font-weight:bold;letter-spacing:-1.377px;left:165.40px;">Все</span>
<div style="left:62.00px;top:562.00px;width:13.50px;height:1.00px;background:repeating-linear-gradient(90deg,#8e8e8e 0,#8e8e8e 1.2px,transparent 1.2px,transparent 3px);"></div>
<svg style="left:76.30px;top:551.20px" width="23" height="23"><use href="#crate" width="23" height="23"/></svg>
<span style="top:557.00px;font-size:17.7px;line-height:17.7px;color:#000;font-weight:bold;left:-241.40px;width:400px;text-align:right;">10</span>
<span style="top:557.00px;font-size:17.7px;line-height:17.7px;color:#000;font-weight:bold;letter-spacing:-0.264px;left:165.40px;">Выгрузка Медок ВСЕ АПТЕКИ</span>
<div style="left:62.00px;top:591.00px;width:13.50px;height:1.00px;background:repeating-linear-gradient(90deg,#8e8e8e 0,#8e8e8e 1.2px,transparent 1.2px,transparent 3px);"></div>
<svg style="left:76.30px;top:579.70px" width="23" height="23"><use href="#crate" width="23" height="23"/></svg>
<span style="top:585.00px;font-size:17.7px;line-height:17.7px;color:#000;font-weight:bold;left:-241.40px;width:400px;text-align:right;">12</span>
<span style="top:585.00px;font-size:17.7px;line-height:17.7px;color:#000;font-weight:bold;letter-spacing:-0.896px;left:165.40px;">АПТЕКИ ДОБРОБУТ</span>
<div style="left:62.00px;top:620.00px;width:13.50px;height:1.00px;background:repeating-linear-gradient(90deg,#8e8e8e 0,#8e8e8e 1.2px,transparent 1.2px,transparent 3px);"></div>
<svg style="left:76.30px;top:608.20px" width="23" height="23"><use href="#crate" width="23" height="23"/></svg>
<span style="top:614.00px;font-size:17.7px;line-height:17.7px;color:#000;font-weight:bold;left:-241.40px;width:400px;text-align:right;">8</span>
<span style="top:614.00px;font-size:17.7px;line-height:17.7px;color:#000;font-weight:bold;letter-spacing:0.367px;left:165.40px;">Выгрузка Медок 1 группа</span>
<div style="left:62.00px;top:648.00px;width:13.50px;height:1.00px;background:repeating-linear-gradient(90deg,#8e8e8e 0,#8e8e8e 1.2px,transparent 1.2px,transparent 3px);"></div>
<svg style="left:76.30px;top:636.70px" width="23" height="23"><use href="#crate" width="23" height="23"/></svg>
<span style="top:642.00px;font-size:17.7px;line-height:17.7px;color:#000;font-weight:bold;left:-241.40px;width:400px;text-align:right;">9</span>
<span style="top:642.00px;font-size:17.7px;line-height:17.7px;color:#000;font-weight:bold;letter-spacing:0.342px;left:165.40px;">Выгрузка Медок 2  группа</span>
<div style="left:62.00px;top:676.00px;width:13.50px;height:1.00px;background:repeating-linear-gradient(90deg,#8e8e8e 0,#8e8e8e 1.2px,transparent 1.2px,transparent 3px);"></div>
<svg style="left:76.30px;top:665.20px" width="23" height="23"><use href="#crate" width="23" height="23"/></svg>
<span style="top:671.00px;font-size:17.7px;line-height:17.7px;color:#000;font-weight:bold;left:-241.40px;width:400px;text-align:right;">14</span>
<span style="top:671.00px;font-size:17.7px;line-height:17.7px;color:#000;font-weight:bold;letter-spacing:-0.272px;left:165.40px;">КУСТ_4</span>
<div style="left:62.00px;top:705.00px;width:13.50px;height:1.00px;background:repeating-linear-gradient(90deg,#8e8e8e 0,#8e8e8e 1.2px,transparent 1.2px,transparent 3px);"></div>
<svg style="left:76.30px;top:693.70px" width="23" height="23"><use href="#crate" width="23" height="23"/></svg>
<span style="top:699.00px;font-size:17.7px;line-height:17.7px;color:#000;font-weight:bold;left:-241.40px;width:400px;text-align:right;">13</span>
<span style="top:699.00px;font-size:17.7px;line-height:17.7px;color:#000;font-weight:bold;letter-spacing:-0.948px;left:165.40px;">ДЗК ЛОРЕАЛЬ</span>
<svg style="left:53.40px;top:728.00px" width="15" height="15"><use href="#ebox" width="15" height="15"/></svg>
<div style="left:68.60px;top:734.00px;width:6.90px;height:1.00px;background:repeating-linear-gradient(90deg,#8e8e8e 0,#8e8e8e 1.2px,transparent 1.2px,transparent 3px);"></div>
<div style="left:89.00px;top:746.10px;width:1.00px;height:16.50px;background:repeating-linear-gradient(180deg,#8e8e8e 0,#8e8e8e 1.2px,transparent 1.2px,transparent 3px);"></div>
<div style="left:90.00px;top:762.00px;width:14.00px;height:1.00px;background:repeating-linear-gradient(90deg,#8e8e8e 0,#8e8e8e 1.2px,transparent 1.2px,transparent 3px);"></div>
<svg style="left:76.30px;top:722.20px" width="23" height="23"><use href="#crate" width="23" height="23"/></svg>
<span style="top:728.00px;font-size:17.7px;line-height:17.7px;color:#000;font-weight:bold;left:-241.40px;width:400px;text-align:right;">15</span>
<span style="top:728.00px;font-size:17.7px;line-height:17.7px;color:#000;font-weight:bold;letter-spacing:-1.481px;left:165.40px;">ПЕРЕМЕЩЕНИЕ ТЗ</span>
<svg style="left:105.00px;top:750.70px" width="23" height="23"><use href="#crate" width="23" height="23"/></svg>
<span style="top:756.00px;font-size:17.7px;line-height:17.7px;color:#000;font-weight:bold;left:-241.40px;width:400px;text-align:right;">16</span>
<span style="top:756.00px;font-size:17.7px;line-height:17.7px;color:#000;font-weight:bold;letter-spacing:-0.677px;left:165.40px;">АПТЕКА 60</span>
<div style="left:62.00px;top:790.00px;width:13.50px;height:1.00px;background:repeating-linear-gradient(90deg,#8e8e8e 0,#8e8e8e 1.2px,transparent 1.2px,transparent 3px);"></div>
<svg style="left:76.30px;top:779.20px" width="23" height="23"><use href="#crate" width="23" height="23"/></svg>
<span style="top:785.00px;font-size:17.7px;line-height:17.7px;color:#000;font-weight:bold;left:-241.40px;width:400px;text-align:right;">1</span>
<span style="top:785.00px;font-size:17.7px;line-height:17.7px;color:#000;font-weight:bold;letter-spacing:-1.211px;left:165.40px;">Филиалы</span>
<div style="left:62.00px;top:819.00px;width:13.50px;height:1.00px;background:repeating-linear-gradient(90deg,#8e8e8e 0,#8e8e8e 1.2px,transparent 1.2px,transparent 3px);"></div>
<svg style="left:76.30px;top:807.70px" width="23" height="23"><use href="#crate" width="23" height="23"/></svg>
<span style="top:813.00px;font-size:17.7px;line-height:17.7px;color:#000;font-weight:bold;left:-241.40px;width:400px;text-align:right;">2</span>
<span style="top:813.00px;font-size:17.7px;line-height:17.7px;color:#000;font-weight:bold;letter-spacing:0.269px;left:165.40px;">Куст 6</span>
<div style="left:62.00px;top:848.00px;width:13.50px;height:1.00px;background:repeating-linear-gradient(90deg,#8e8e8e 0,#8e8e8e 1.2px,transparent 1.2px,transparent 3px);"></div>
<svg style="left:76.30px;top:836.20px" width="23" height="23"><use href="#crate" width="23" height="23"/></svg>
<span style="top:842.00px;font-size:17.7px;line-height:17.7px;color:#000;font-weight:bold;left:-241.40px;width:400px;text-align:right;">3</span>
<span style="top:842.00px;font-size:17.7px;line-height:17.7px;color:#000;font-weight:bold;letter-spacing:-0.568px;left:165.40px;">КУСТ 1</span>
<div style="left:62.00px;top:876.00px;width:13.50px;height:1.00px;background:repeating-linear-gradient(90deg,#8e8e8e 0,#8e8e8e 1.2px,transparent 1.2px,transparent 3px);"></div>
<svg style="left:76.30px;top:864.70px" width="23" height="23"><use href="#crate" width="23" height="23"/></svg>
<span style="top:870.00px;font-size:17.7px;line-height:17.7px;color:#000;font-weight:bold;left:-241.40px;width:400px;text-align:right;">4</span>
<span style="top:870.00px;font-size:17.7px;line-height:17.7px;color:#000;font-weight:bold;letter-spacing:0.269px;left:165.40px;">Куст 2</span>
<div style="left:62.00px;top:904.00px;width:13.50px;height:1.00px;background:repeating-linear-gradient(90deg,#8e8e8e 0,#8e8e8e 1.2px,transparent 1.2px,transparent 3px);"></div>
<svg style="left:76.30px;top:893.20px" width="23" height="23"><use href="#crate" width="23" height="23"/></svg>
<span style="top:899.00px;font-size:17.7px;line-height:17.7px;color:#000;font-weight:bold;left:-241.40px;width:400px;text-align:right;">5</span>
<span style="top:899.00px;font-size:17.7px;line-height:17.7px;color:#000;font-weight:bold;letter-spacing:-0.548px;left:165.40px;">СК ДЛЯ КОЛЛЦЕНТРА</span>
<div style="left:62.00px;top:933.00px;width:13.50px;height:1.00px;background:repeating-linear-gradient(90deg,#8e8e8e 0,#8e8e8e 1.2px,transparent 1.2px,transparent 3px);"></div>
<svg style="left:76.30px;top:921.70px" width="23" height="23"><use href="#crate" width="23" height="23"/></svg>
<span style="top:927.00px;font-size:17.7px;line-height:17.7px;color:#000;font-weight:bold;left:-241.40px;width:400px;text-align:right;">11</span>
<span style="top:927.00px;font-size:17.7px;line-height:17.7px;color:#000;font-weight:bold;letter-spacing:-0.272px;left:165.40px;">КУСТ_5</span>
<svg style="left:5.80px;top:528.60px" width="9" height="14" viewBox="0 0 9 14"><path d="M0.2 0.2 L8.4 7 L0.2 13.8 Z" fill="#000"/></svg>
<div style="left:0.00px;top:1275.20px;width:518.00px;height:35.00px;background:#f0f0f0;border:2px solid #bfbfbf;border-left:none;"></div>
<div style="left:17.00px;top:1276.00px;width:1.40px;height:34.00px;background:#a3a3a3;"></div>
<div style="left:162.80px;top:1279.60px;width:353.40px;height:27.00px;background:#f0f0f0;border:2px solid #bdbdbd;border-right-color:#fafafa;border-bottom-color:#fafafa;"></div>
<span style="top:1286.00px;font-size:17.7px;line-height:17.7px;color:#000;font-weight:bold;letter-spacing:-0.450px;left:166.50px;">Записей: 15</span>
<div style="left:0.00px;top:1310.00px;width:2159.00px;height:71.00px;background:#f0f0f0;"></div>
<svg style="left:3px;top:1312px" width="382" height="38" viewBox="3 1312 382 38"><rect x="5.4" y="1314.2" width="185.6" height="32.6" fill="#f0f0f0" stroke="#1c1c1c" stroke-width="1.6"/><rect x="195.7" y="1314.2" width="186.1" height="32.6" fill="#fbd0a8" stroke="#3c96dc" stroke-width="1.6"/></svg>
<span style="top:1322.00px;font-size:17px;line-height:17px;color:#1c1c1c;-webkit-text-stroke:0.3px #1c1c1c;letter-spacing:-0.516px;left:9.30px;">Головна</span>
<span style="top:1322.00px;font-size:17px;line-height:17px;color:#1c1c1c;-webkit-text-stroke:0.3px #1c1c1c;letter-spacing:-0.565px;left:199.70px;">Асортимент матриці</span>
<span style="top:1322.00px;font-size:17px;line-height:17px;color:#1c1c1c;-webkit-text-stroke:0.3px #1c1c1c;letter-spacing:0.914px;left:360.00px;">...</span>
<div style="left:0.00px;top:1351.00px;width:2159.00px;height:1.20px;background:#d4d4d4;"></div>
<div style="left:0.00px;top:1379.00px;width:2159.00px;height:1.00px;background:#fbfbfb;"></div>
<div style="left:0.00px;top:1380.00px;width:2159.00px;height:1.00px;background:#101010;"></div>
<div style="left:297.00px;top:1354.00px;width:1.00px;height:25.00px;background:#d6d6d6;"></div>
<div style="left:298.00px;top:1354.00px;width:1.00px;height:25.00px;background:#fafafa;"></div>
<div style="left:603.00px;top:1354.00px;width:1.00px;height:25.00px;background:#d6d6d6;"></div>
<div style="left:604.00px;top:1354.00px;width:1.00px;height:25.00px;background:#fafafa;"></div>
<div style="left:661.50px;top:1354.00px;width:1.00px;height:25.00px;background:#d6d6d6;"></div>
<div style="left:662.50px;top:1354.00px;width:1.00px;height:25.00px;background:#fafafa;"></div>
<div style="left:1117.50px;top:1354.00px;width:1.00px;height:25.00px;background:#d6d6d6;"></div>
<div style="left:1118.50px;top:1354.00px;width:1.00px;height:25.00px;background:#fafafa;"></div>
<span style="top:1359.00px;font-size:17.6px;line-height:17.6px;color:#1c1c1c;-webkit-text-stroke:0.12px #1c1c1c;letter-spacing:-0.685px;left:30.60px;">База даних: TASA3@TITAN</span>
<span style="top:1359.00px;font-size:17.6px;line-height:17.6px;color:#1c1c1c;-webkit-text-stroke:0.12px #1c1c1c;letter-spacing:-0.871px;left:329.40px;">Користувач: GIFT</span>
<span style="top:1359.00px;font-size:17.6px;line-height:17.6px;color:#1c1c1c;-webkit-text-stroke:0.12px #1c1c1c;left:634.70px;">2</span>
<span style="top:1359.00px;font-size:17.6px;line-height:17.6px;color:#1c1c1c;-webkit-text-stroke:0.12px #1c1c1c;letter-spacing:-0.553px;left:666.20px;">Кассовый аппарат не подключен</span>
<span style="top:1359.00px;font-size:17.6px;line-height:17.6px;color:#1c1c1c;-webkit-text-stroke:0.12px #1c1c1c;letter-spacing:-0.712px;left:1123.40px;">Зона: Склад [1]</span>
<svg style="left:4px;top:1356px" width="20" height="23" viewBox="0 0 20 23"><defs><linearGradient id="db1" x1="0" y1="0" x2="1" y2="0"><stop offset="0" stop-color="#d6d6ee"/><stop offset="0.5" stop-color="#b4b4cc"/><stop offset="1" stop-color="#8e86b8"/></linearGradient><linearGradient id="db2" x1="0" y1="0" x2="1" y2="0"><stop offset="0" stop-color="#3b8fe6"/><stop offset="0.5" stop-color="#1878de"/><stop offset="1" stop-color="#2a86dc"/></linearGradient><linearGradient id="db3" x1="0" y1="0" x2="1" y2="1"><stop offset="0" stop-color="#b4acd8"/><stop offset="1" stop-color="#7464a8"/></linearGradient></defs><path d="M1.2 1.6 Q9 0.2 17.6 1.4 Q18.6 1.6 18.6 2.8 V7 H1 V2.4 Q1 1.8 1.2 1.6 Z" fill="url(#db1)"/><rect x="0.8" y="6.4" width="17.8" height="10.2" fill="url(#db2)"/><path d="M0.8 8.4 H18.6 M0.8 11.2 H18.6 M0.8 14 H18.6" stroke="#8ab8ee" stroke-width="0.9"/><path d="M1.6 9.6 H3.6 M1.6 12.4 H3.6 M1.6 15.2 H3.6" stroke="#e8f0fc" stroke-width="1"/><path d="M0.8 16.4 H18.6 V19.6 Q12 21.4 5.4 21.8 Q3.4 21.6 0.8 18.8 Z" fill="url(#db3)"/></svg>
<svg style="left:303px;top:1356px" width="18" height="23" viewBox="0 0 18 23"><defs><radialGradient id="us1" cx="0.4" cy="0.35" r="0.7"><stop offset="0" stop-color="#e4e6fa"/><stop offset="1" stop-color="#7a7ed0"/></radialGradient></defs><circle cx="5.6" cy="6" r="4.9" fill="#ea2c0c"/><path d="M1.6 21.4 Q1 14 6 13.2 L12.6 13.2 Q17.4 14 16.8 21.4 Q9 23.2 1.6 21.4 Z" fill="url(#us1)"/><circle cx="9.9" cy="8.2" r="4.7" fill="url(#us1)"/><path d="M6.6 12.2 Q9.4 13.6 12.6 12.2 L9.6 15.8 Z" fill="#f0a23c"/><path d="M3 15.4 Q9 13.6 15.4 15.4" stroke="#eef0fc" stroke-width="1" fill="none" opacity="0.8"/></svg>
<svg style="left:606px;top:1355px" width="23" height="24" viewBox="0 0 23 24"><defs><linearGradient id="cs1" x1="0" y1="0" x2="0.6" y2="1"><stop offset="0" stop-color="#d4d6f2"/><stop offset="0.5" stop-color="#a4a6da"/><stop offset="1" stop-color="#6e70c0"/></linearGradient></defs><path d="M14 0.6 L19.6 8" stroke="#6a6a8a" stroke-width="1" fill="none"/><path d="M3.4 4.6 Q5 3 7 3 H13.6 Q15.4 3.2 16.6 4.6 L20.4 8.4 Q21 9 21 10 V18.6 Q21 19.6 20 19.6 H16 L13 15 L9.6 20 H2.6 Q1.2 19.8 1.2 18 V9 Q1.2 6.4 3.4 4.6 Z" fill="url(#cs1)"/><path d="M6.4 3.8 H13" stroke="#8a8cd0" stroke-width="1.4"/><path d="M4.6 11 L6.8 11.4 L4.2 21.4 L2 21 Z" fill="#f6e45a" stroke="#c08a18" stroke-width="0.8"/><path d="M6.8 11.4 L8 11.8 L5.2 21.6 L4.2 21.4 Z" fill="#3a3a3a"/><path d="M13.8 14.2 L16 14.6 L14.2 23 L12 22.6 Z" fill="#f6e45a" stroke="#c08a18" stroke-width="0.8"/><path d="M12 22.6 L13.8 14.2 L12.8 14 L11 22.2 Z" fill="#3a3a3a"/></svg>
<div style="left:553.30px;top:165.00px;width:5.00px;height:1145.00px;background:#f0f0f0;"></div>
<div style="left:558.20px;top:184.80px;width:1600.80px;height:54.40px;background:#f0f0f0;"></div>
<span style="top:205.00px;font-size:17.7px;line-height:17.7px;color:#111;font-weight:bold;letter-spacing:1.012px;left:570.40px;">Перетягніть заголовок колонки сюди для угруповання з цього стовпцю</span>
<div style="left:558.20px;top:239.00px;width:1576.30px;height:29.00px;background:#fff;"></div>
<div style="left:573.80px;top:239.00px;width:1.40px;height:29.00px;background:#e9e9e9;"></div>
<div style="left:660.30px;top:239.00px;width:1.40px;height:29.00px;background:#e9e9e9;"></div>
<div style="left:691.30px;top:239.00px;width:1.40px;height:29.00px;background:#e9e9e9;"></div>
<div style="left:1301.90px;top:239.00px;width:1.40px;height:29.00px;background:#e9e9e9;"></div>
<div style="left:1420.30px;top:239.00px;width:1.40px;height:29.00px;background:#e9e9e9;"></div>
<div style="left:1606.30px;top:239.00px;width:1.40px;height:29.00px;background:#e9e9e9;"></div>
<div style="left:1767.10px;top:239.00px;width:1.40px;height:29.00px;background:#e9e9e9;"></div>
<div style="left:1906.30px;top:239.00px;width:1.40px;height:29.00px;background:#e9e9e9;"></div>
<div style="left:2070.10px;top:239.00px;width:1.40px;height:29.00px;background:#e9e9e9;"></div>
<svg style="left:561.60px;top:245.60px" width="11" height="16"><use href="#hicon" width="11" height="16"/></svg>
<span style="top:246.00px;font-size:16.5px;line-height:16.5px;color:#20202a;-webkit-text-stroke:0.3px #20202a;letter-spacing:-0.387px;left:580.20px;">У матриці</span>
<span style="top:246.00px;font-size:16.5px;line-height:16.5px;color:#20202a;-webkit-text-stroke:0.3px #20202a;letter-spacing:0.334px;left:666.50px;">ІД</span>
<span style="top:246.00px;font-size:16.5px;line-height:16.5px;color:#20202a;-webkit-text-stroke:0.3px #20202a;letter-spacing:-0.630px;left:951.30px;">Назва фірми</span>
<span style="top:246.00px;font-size:16.5px;line-height:16.5px;color:#20202a;-webkit-text-stroke:0.3px #20202a;letter-spacing:0.008px;left:1314.70px;">Абревіатура</span>
<span style="top:246.00px;font-size:16.5px;line-height:16.5px;color:#20202a;-webkit-text-stroke:0.3px #20202a;letter-spacing:0.028px;left:1424.80px;">Внутрішній штрих-код</span>
<span style="top:246.00px;font-size:16.5px;line-height:16.5px;color:#20202a;-webkit-text-stroke:0.3px #20202a;letter-spacing:-0.826px;left:1655.50px;">Є філією</span>
<span style="top:246.00px;font-size:16.5px;line-height:16.5px;color:#20202a;-webkit-text-stroke:0.3px #20202a;letter-spacing:-0.151px;left:1789.90px;">Повна назва</span>
<span style="top:246.00px;font-size:16.5px;line-height:16.5px;color:#20202a;-webkit-text-stroke:0.3px #20202a;letter-spacing:-0.141px;left:1918.70px;">Юридична адреса</span>
<div style="left:2070.8px;top:239px;width:63.7px;height:29px;overflow:hidden">
<span style="top:7.00px;font-size:16.5px;line-height:16.5px;color:#20202a;-webkit-text-stroke:0.3px #20202a;letter-spacing:-0.535px;left:5.20px;">Головне підприємство</span>
</div>
<div style="left:558.2px;top:268.2px;width:1576.3px;height:981.4px;overflow:hidden;background:#fff">
<div style="left:0.00px;top:0.00px;width:16.30px;height:981.40px;background:#efefef;"></div>
<svg style="left:0;top:0" width="1576.3" height="981.4" fill="#a3a3a3"><rect x="15.55" y="0" width="1.5" height="981.4"/><rect x="133.05" y="0" width="1.5" height="981.4"/><rect x="743.65" y="0" width="1.5" height="981.4"/><rect x="862.05" y="0" width="1.5" height="981.4"/><rect x="1048.05" y="0" width="1.5" height="981.4"/><rect x="1208.85" y="0" width="1.5" height="981.4"/><rect x="1348.05" y="0" width="1.5" height="981.4"/><rect x="1511.85" y="0" width="1.5" height="981.4"/><rect x="0" y="26.45" width="1576.3" height="1.5"/><rect x="0" y="54.95" width="1576.3" height="1.5"/><rect x="0" y="83.45" width="1576.3" height="1.5"/><rect x="0" y="111.95" width="1576.3" height="1.5"/><rect x="0" y="140.45" width="1576.3" height="1.5"/><rect x="0" y="168.95" width="1576.3" height="1.5"/><rect x="0" y="197.45" width="1576.3" height="1.5"/><rect x="0" y="225.95" width="1576.3" height="1.5"/><rect x="0" y="254.45" width="1576.3" height="1.5"/><rect x="0" y="282.95" width="1576.3" height="1.5"/><rect x="0" y="311.45" width="1576.3" height="1.5"/><rect x="0" y="339.95" width="1576.3" height="1.5"/><rect x="0" y="368.45" width="1576.3" height="1.5"/><rect x="0" y="396.95" width="1576.3" height="1.5"/><rect x="0" y="425.45" width="1576.3" height="1.5"/><rect x="0" y="453.95" width="1576.3" height="1.5"/><rect x="0" y="482.45" width="1576.3" height="1.5"/><rect x="0" y="510.95" width="1576.3" height="1.5"/><rect x="0" y="539.45" width="1576.3" height="1.5"/><rect x="0" y="567.95" width="1576.3" height="1.5"/><rect x="0" y="596.45" width="1576.3" height="1.5"/><rect x="0" y="624.95" width="1576.3" height="1.5"/><rect x="0" y="653.45" width="1576.3" height="1.5"/><rect x="0" y="681.95" width="1576.3" height="1.5"/><rect x="0" y="710.45" width="1576.3" height="1.5"/><rect x="0" y="738.95" width="1576.3" height="1.5"/><rect x="0" y="767.45" width="1576.3" height="1.5"/><rect x="0" y="795.95" width="1576.3" height="1.5"/><rect x="0" y="824.45" width="1576.3" height="1.5"/><rect x="0" y="852.95" width="1576.3" height="1.5"/><rect x="0" y="881.45" width="1576.3" height="1.5"/><rect x="0" y="909.95" width="1576.3" height="1.5"/><rect x="0" y="938.45" width="1576.3" height="1.5"/><rect x="0" y="966.95" width="1576.3" height="1.5"/><rect x="0" y="995.45" width="1576.3" height="1.5"/></svg>
<svg style="left:49.10px;top:2.30px" width="20" height="20"><use href="#cb0" width="20" height="20"/></svg>
<span style="top:5.00px;font-size:17.7px;line-height:17.7px;color:#000;font-weight:bold;letter-spacing:-1.598px;left:110.30px;">7...</span>
<span style="top:5.00px;font-size:17.7px;line-height:17.7px;color:#000;font-weight:bold;letter-spacing:-0.154px;left:138.10px;">Смірнова Тетяна Юрьївна</span>
<span style="top:5.00px;font-size:17.7px;line-height:17.7px;color:#000;font-weight:bold;letter-spacing:0.607px;left:867.40px;">5029</span>
<svg style="left:1118.70px;top:2.30px" width="20" height="20"><use href="#cb1" width="20" height="20"/></svg>
<span style="top:5.00px;font-size:17.7px;line-height:17.7px;color:#000;font-weight:bold;letter-spacing:0.322px;left:1213.60px;">Аптека №83 ...</span>
<svg style="left:49.10px;top:30.80px" width="20" height="20"><use href="#cb0" width="20" height="20"/></svg>
<span style="top:34.00px;font-size:17.7px;line-height:17.7px;color:#000;font-weight:bold;letter-spacing:-1.598px;left:110.30px;">2...</span>
<span style="top:34.00px;font-size:17.7px;line-height:17.7px;color:#000;font-weight:bold;letter-spacing:0.029px;left:138.10px;">Апт №003 пгт.Барышевка, ул.Киевский шлях,126а</span>
<svg style="left:1118.70px;top:30.80px" width="20" height="20"><use href="#cb1" width="20" height="20"/></svg>
<span style="top:34.00px;font-size:17.7px;line-height:17.7px;color:#000;font-weight:bold;letter-spacing:0.384px;left:1213.60px;">Апт №003 пг...</span>
<span style="top:34.00px;font-size:17.7px;line-height:17.7px;color:#000;font-weight:bold;left:1516.70px;">Апт №003</span>
<svg style="left:49.10px;top:59.30px" width="20" height="20"><use href="#cb0" width="20" height="20"/></svg>
<span style="top:62.00px;font-size:17.7px;line-height:17.7px;color:#000;font-weight:bold;letter-spacing:-1.598px;left:110.30px;">7...</span>
<span style="top:62.00px;font-size:17.7px;line-height:17.7px;color:#000;font-weight:bold;letter-spacing:0.248px;left:138.10px;">Апт №006 г.Киев, ул.Саксаганского,39-А</span>
<span style="top:62.00px;font-size:17.7px;line-height:17.7px;color:#000;font-weight:bold;letter-spacing:0.578px;left:748.70px;">124545</span>
<span style="top:62.00px;font-size:17.7px;line-height:17.7px;color:#000;font-weight:bold;letter-spacing:0.607px;left:867.40px;">3805</span>
<svg style="left:1118.70px;top:59.30px" width="20" height="20"><use href="#cb1" width="20" height="20"/></svg>
<span style="top:62.00px;font-size:17.7px;line-height:17.7px;color:#000;font-weight:bold;letter-spacing:-0.122px;left:1213.60px;">А6 г.Киев ул....</span>
<svg style="left:49.10px;top:87.80px" width="20" height="20"><use href="#cb0" width="20" height="20"/></svg>
<span style="top:91.00px;font-size:17.7px;line-height:17.7px;color:#000;font-weight:bold;letter-spacing:-1.188px;left:109.80px;">81</span>
<span style="top:91.00px;font-size:17.7px;line-height:17.7px;color:#000;font-weight:bold;letter-spacing:0.061px;left:138.10px;">Апт №010 г.Березань, ул. Шевченковский шлях,156</span>
<span style="top:91.00px;font-size:17.7px;line-height:17.7px;color:#000;font-weight:bold;letter-spacing:0.591px;left:748.70px;">31268</span>
<span style="top:91.00px;font-size:17.7px;line-height:17.7px;color:#000;font-weight:bold;letter-spacing:0.607px;left:867.40px;">5241</span>
<svg style="left:1118.70px;top:87.80px" width="20" height="20"><use href="#cb1" width="20" height="20"/></svg>
<span style="top:91.00px;font-size:17.7px;line-height:17.7px;color:#000;font-weight:bold;letter-spacing:0.204px;left:1213.60px;">Апт №010 г.Б...</span>
<span style="top:91.00px;font-size:17.7px;line-height:17.7px;color:#000;font-weight:bold;letter-spacing:-2.253px;left:1516.70px;">ТОВ</span>
<svg style="left:49.10px;top:116.30px" width="20" height="20"><use href="#cb0" width="20" height="20"/></svg>
<span style="top:119.00px;font-size:17.7px;line-height:17.7px;color:#000;font-weight:bold;letter-spacing:-1.598px;left:110.30px;">7...</span>
<span style="top:119.00px;font-size:17.7px;line-height:17.7px;color:#000;font-weight:bold;letter-spacing:0.341px;left:138.10px;">Апт №011 г.Киев, пр-т.Победы,142а</span>
<span style="top:119.00px;font-size:17.7px;line-height:17.7px;color:#000;font-weight:bold;letter-spacing:0.591px;left:748.70px;">32495</span>
<span style="top:119.00px;font-size:17.7px;line-height:17.7px;color:#000;font-weight:bold;letter-spacing:0.607px;left:867.40px;">5251</span>
<svg style="left:1118.70px;top:116.30px" width="20" height="20"><use href="#cb1" width="20" height="20"/></svg>
<span style="top:119.00px;font-size:17.7px;line-height:17.7px;color:#000;font-weight:bold;letter-spacing:0.411px;left:1213.60px;">Апт №011 г.К...</span>
<span style="top:119.00px;font-size:17.7px;line-height:17.7px;color:#000;font-weight:bold;letter-spacing:-2.253px;left:1516.70px;">ТОВ</span>
<svg style="left:49.10px;top:144.80px" width="20" height="20"><use href="#cb0" width="20" height="20"/></svg>
<span style="top:148.00px;font-size:17.7px;line-height:17.7px;color:#000;font-weight:bold;letter-spacing:-1.598px;left:110.30px;">7...</span>
<span style="top:148.00px;font-size:17.7px;line-height:17.7px;color:#000;font-weight:bold;letter-spacing:0.280px;left:138.10px;">Апт №012 г.Киев, пр-т.Воздухофлотский,50/2</span>
<span style="top:148.00px;font-size:17.7px;line-height:17.7px;color:#000;font-weight:bold;letter-spacing:0.591px;left:748.70px;">32468</span>
<span style="top:148.00px;font-size:17.7px;line-height:17.7px;color:#000;font-weight:bold;letter-spacing:0.607px;left:867.40px;">5225</span>
<svg style="left:1118.70px;top:144.80px" width="20" height="20"><use href="#cb1" width="20" height="20"/></svg>
<span style="top:148.00px;font-size:17.7px;line-height:17.7px;color:#000;font-weight:bold;letter-spacing:0.340px;left:1213.60px;">Апт №012 г.К...</span>
<svg style="left:49.10px;top:173.30px" width="20" height="20"><use href="#cb0" width="20" height="20"/></svg>
<span style="top:176.00px;font-size:17.7px;line-height:17.7px;color:#000;font-weight:bold;letter-spacing:-1.598px;left:110.30px;">7...</span>
<span style="top:176.00px;font-size:17.7px;line-height:17.7px;color:#000;font-weight:bold;letter-spacing:0.282px;left:138.10px;">Апт №015 г.Киев, б-р.Л.Украинки,19/16</span>
<span style="top:176.00px;font-size:17.7px;line-height:17.7px;color:#000;font-weight:bold;letter-spacing:0.591px;left:748.70px;">34435</span>
<span style="top:176.00px;font-size:17.7px;line-height:17.7px;color:#000;font-weight:bold;letter-spacing:0.607px;left:867.40px;">5226</span>
<svg style="left:1118.70px;top:173.30px" width="20" height="20"><use href="#cb1" width="20" height="20"/></svg>
<span style="top:176.00px;font-size:17.7px;line-height:17.7px;color:#000;font-weight:bold;letter-spacing:0.340px;left:1213.60px;">Апт №015 г.К...</span>
<svg style="left:49.10px;top:201.80px" width="20" height="20"><use href="#cb0" width="20" height="20"/></svg>
<span style="top:205.00px;font-size:17.7px;line-height:17.7px;color:#000;font-weight:bold;letter-spacing:-1.598px;left:110.30px;">7...</span>
<span style="top:205.00px;font-size:17.7px;line-height:17.7px;color:#000;font-weight:bold;letter-spacing:0.138px;left:138.10px;">Апт №022 г.Киев, б-р.Л.Украинки,34</span>
<span style="top:205.00px;font-size:17.7px;line-height:17.7px;color:#000;font-weight:bold;letter-spacing:0.591px;left:748.70px;">38131</span>
<span style="top:205.00px;font-size:17.7px;line-height:17.7px;color:#000;font-weight:bold;letter-spacing:0.607px;left:867.40px;">5227</span>
<svg style="left:1118.70px;top:201.80px" width="20" height="20"><use href="#cb1" width="20" height="20"/></svg>
<span style="top:205.00px;font-size:17.7px;line-height:17.7px;color:#000;font-weight:bold;letter-spacing:0.340px;left:1213.60px;">Апт №022 г.К...</span>
<span style="top:205.00px;font-size:17.7px;line-height:17.7px;color:#000;font-weight:bold;left:1516.70px;">ТМН ТАС</span>
<svg style="left:49.10px;top:230.30px" width="20" height="20"><use href="#cb0" width="20" height="20"/></svg>
<span style="top:233.00px;font-size:17.7px;line-height:17.7px;color:#000;font-weight:bold;letter-spacing:-1.598px;left:110.30px;">7...</span>
<span style="top:233.00px;font-size:17.7px;line-height:17.7px;color:#000;font-weight:bold;letter-spacing:0.263px;left:138.10px;">Апт №024 г.Киев, ул.Жилянская,146/13</span>
<span style="top:233.00px;font-size:17.7px;line-height:17.7px;color:#000;font-weight:bold;letter-spacing:0.607px;left:867.40px;">3623</span>
<svg style="left:1118.70px;top:230.30px" width="20" height="20"><use href="#cb1" width="20" height="20"/></svg>
<span style="top:233.00px;font-size:17.7px;line-height:17.7px;color:#000;font-weight:bold;letter-spacing:0.027px;left:1213.60px;">А№24 г.Киев ...</span>
<svg style="left:49.10px;top:258.80px" width="20" height="20"><use href="#cb0" width="20" height="20"/></svg>
<span style="top:262.00px;font-size:17.7px;line-height:17.7px;color:#000;font-weight:bold;letter-spacing:-1.598px;left:110.30px;">7...</span>
<span style="top:262.00px;font-size:17.7px;line-height:17.7px;color:#000;font-weight:bold;letter-spacing:0.367px;left:138.10px;">Апт №027 г.Киев, ул.Урловская,11/44</span>
<span style="top:262.00px;font-size:17.7px;line-height:17.7px;color:#000;font-weight:bold;letter-spacing:0.591px;left:748.70px;">39450</span>
<span style="top:262.00px;font-size:17.7px;line-height:17.7px;color:#000;font-weight:bold;letter-spacing:0.607px;left:867.40px;">5252</span>
<svg style="left:1118.70px;top:258.80px" width="20" height="20"><use href="#cb1" width="20" height="20"/></svg>
<span style="top:262.00px;font-size:17.7px;line-height:17.7px;color:#000;font-weight:bold;letter-spacing:0.340px;left:1213.60px;">Апт №027 г.К...</span>
<svg style="left:49.10px;top:287.30px" width="20" height="20"><use href="#cb0" width="20" height="20"/></svg>
<span style="top:290.00px;font-size:17.7px;line-height:17.7px;color:#000;font-weight:bold;letter-spacing:-1.598px;left:110.30px;">7...</span>
<span style="top:290.00px;font-size:17.7px;line-height:17.7px;color:#000;font-weight:bold;letter-spacing:0.182px;left:138.10px;">Апт №028 г.Киев, ул.Горького,47а</span>
<span style="top:290.00px;font-size:17.7px;line-height:17.7px;color:#000;font-weight:bold;letter-spacing:0.591px;left:748.70px;">39103</span>
<span style="top:290.00px;font-size:17.7px;line-height:17.7px;color:#000;font-weight:bold;letter-spacing:0.607px;left:867.40px;">3624</span>
<svg style="left:1118.70px;top:287.30px" width="20" height="20"><use href="#cb1" width="20" height="20"/></svg>
<span style="top:290.00px;font-size:17.7px;line-height:17.7px;color:#000;font-weight:bold;letter-spacing:0.340px;left:1213.60px;">Апт №028 г.К...</span>
<svg style="left:49.10px;top:315.80px" width="20" height="20"><use href="#cb0" width="20" height="20"/></svg>
<span style="top:319.00px;font-size:17.7px;line-height:17.7px;color:#000;font-weight:bold;letter-spacing:-1.598px;left:110.30px;">7...</span>
<span style="top:319.00px;font-size:17.7px;line-height:17.7px;color:#000;font-weight:bold;letter-spacing:0.001px;left:138.10px;">Апт №032 г.Яготин, ул.Независимости,71</span>
<span style="top:319.00px;font-size:17.7px;line-height:17.7px;color:#000;font-weight:bold;letter-spacing:0.591px;left:748.70px;">39520</span>
<span style="top:319.00px;font-size:17.7px;line-height:17.7px;color:#000;font-weight:bold;letter-spacing:0.607px;left:867.40px;">5285</span>
<svg style="left:1118.70px;top:315.80px" width="20" height="20"><use href="#cb1" width="20" height="20"/></svg>
<span style="top:319.00px;font-size:17.7px;line-height:17.7px;color:#000;font-weight:bold;letter-spacing:0.328px;left:1213.60px;">Апт №032 г....</span>
<svg style="left:49.10px;top:344.30px" width="20" height="20"><use href="#cb0" width="20" height="20"/></svg>
<span style="top:347.00px;font-size:17.7px;line-height:17.7px;color:#000;font-weight:bold;letter-spacing:-1.598px;left:110.30px;">7...</span>
<span style="top:347.00px;font-size:17.7px;line-height:17.7px;color:#000;font-weight:bold;letter-spacing:0.208px;left:138.10px;">Апт №033 г.Киев, ул.Институтская,16</span>
<span style="top:347.00px;font-size:17.7px;line-height:17.7px;color:#000;font-weight:bold;letter-spacing:0.591px;left:748.70px;">44447</span>
<span style="top:347.00px;font-size:17.7px;line-height:17.7px;color:#000;font-weight:bold;letter-spacing:0.607px;left:867.40px;">5229</span>
<svg style="left:1118.70px;top:344.30px" width="20" height="20"><use href="#cb1" width="20" height="20"/></svg>
<span style="top:347.00px;font-size:17.7px;line-height:17.7px;color:#000;font-weight:bold;letter-spacing:0.340px;left:1213.60px;">Апт №033 г.К...</span>
<svg style="left:49.10px;top:372.80px" width="20" height="20"><use href="#cb0" width="20" height="20"/></svg>
<span style="top:376.00px;font-size:17.7px;line-height:17.7px;color:#000;font-weight:bold;letter-spacing:-1.598px;left:110.30px;">7...</span>
<span style="top:376.00px;font-size:17.7px;line-height:17.7px;color:#000;font-weight:bold;letter-spacing:0.142px;left:138.10px;">Апт №034 г.Киев, ул.Л.Толстого,5</span>
<span style="top:376.00px;font-size:17.7px;line-height:17.7px;color:#000;font-weight:bold;letter-spacing:0.591px;left:748.70px;">44870</span>
<span style="top:376.00px;font-size:17.7px;line-height:17.7px;color:#000;font-weight:bold;letter-spacing:0.607px;left:867.40px;">5230</span>
<svg style="left:1118.70px;top:372.80px" width="20" height="20"><use href="#cb1" width="20" height="20"/></svg>
<span style="top:376.00px;font-size:17.7px;line-height:17.7px;color:#000;font-weight:bold;letter-spacing:0.340px;left:1213.60px;">Апт №034 г.К...</span>
<svg style="left:49.10px;top:401.30px" width="20" height="20"><use href="#cb0" width="20" height="20"/></svg>
<span style="top:404.00px;font-size:17.7px;line-height:17.7px;color:#000;font-weight:bold;letter-spacing:-1.598px;left:110.30px;">7...</span>
<span style="top:404.00px;font-size:17.7px;line-height:17.7px;color:#000;font-weight:bold;letter-spacing:0.017px;left:138.10px;">Апт №035 г.Вишневый, ул.Октябрьская,16</span>
<span style="top:404.00px;font-size:17.7px;line-height:17.7px;color:#000;font-weight:bold;letter-spacing:0.607px;left:867.40px;">3976</span>
<svg style="left:1118.70px;top:401.30px" width="20" height="20"><use href="#cb1" width="20" height="20"/></svg>
<span style="top:404.00px;font-size:17.7px;line-height:17.7px;color:#000;font-weight:bold;letter-spacing:-0.200px;left:1213.60px;">А№35 г.Вишн...</span>
<svg style="left:49.10px;top:429.80px" width="20" height="20"><use href="#cb0" width="20" height="20"/></svg>
<span style="top:433.00px;font-size:17.7px;line-height:17.7px;color:#000;font-weight:bold;letter-spacing:-1.598px;left:110.30px;">7...</span>
<span style="top:433.00px;font-size:17.7px;line-height:17.7px;color:#000;font-weight:bold;letter-spacing:0.045px;left:138.10px;">Апт №036 г.Киев, ул.Соломенская,33</span>
<span style="top:433.00px;font-size:17.7px;line-height:17.7px;color:#000;font-weight:bold;letter-spacing:0.591px;left:748.70px;">49029</span>
<span style="top:433.00px;font-size:17.7px;line-height:17.7px;color:#000;font-weight:bold;letter-spacing:0.607px;left:867.40px;">5253</span>
<svg style="left:1118.70px;top:429.80px" width="20" height="20"><use href="#cb1" width="20" height="20"/></svg>
<span style="top:433.00px;font-size:17.7px;line-height:17.7px;color:#000;font-weight:bold;letter-spacing:0.340px;left:1213.60px;">Апт №036 г.К...</span>
<svg style="left:49.10px;top:458.30px" width="20" height="20"><use href="#cb0" width="20" height="20"/></svg>
<span style="top:461.00px;font-size:17.7px;line-height:17.7px;color:#000;font-weight:bold;letter-spacing:-1.598px;left:110.30px;">7...</span>
<span style="top:461.00px;font-size:17.7px;line-height:17.7px;color:#000;font-weight:bold;letter-spacing:0.094px;left:138.10px;">Апт №040 г.Киев, ул.Нижний Вал,37/20</span>
<span style="top:461.00px;font-size:17.7px;line-height:17.7px;color:#000;font-weight:bold;letter-spacing:0.591px;left:748.70px;">51273</span>
<span style="top:461.00px;font-size:17.7px;line-height:17.7px;color:#000;font-weight:bold;letter-spacing:0.607px;left:867.40px;">5254</span>
<svg style="left:1118.70px;top:458.30px" width="20" height="20"><use href="#cb1" width="20" height="20"/></svg>
<span style="top:461.00px;font-size:17.7px;line-height:17.7px;color:#000;font-weight:bold;letter-spacing:0.340px;left:1213.60px;">Апт №040 г.К...</span>
<svg style="left:49.10px;top:486.80px" width="20" height="20"><use href="#cb0" width="20" height="20"/></svg>
<span style="top:490.00px;font-size:17.7px;line-height:17.7px;color:#000;font-weight:bold;letter-spacing:-1.598px;left:110.30px;">7...</span>
<span style="top:490.00px;font-size:17.7px;line-height:17.7px;color:#000;font-weight:bold;letter-spacing:0.141px;left:138.10px;">Апт №042 г.Киев, ул.Старовокзальная,26</span>
<span style="top:490.00px;font-size:17.7px;line-height:17.7px;color:#000;font-weight:bold;letter-spacing:0.607px;left:867.40px;">4165</span>
<svg style="left:1118.70px;top:486.80px" width="20" height="20"><use href="#cb1" width="20" height="20"/></svg>
<span style="top:490.00px;font-size:17.7px;line-height:17.7px;color:#000;font-weight:bold;letter-spacing:0.027px;left:1213.60px;">А№42 г.Киев ...</span>
<svg style="left:49.10px;top:515.30px" width="20" height="20"><use href="#cb0" width="20" height="20"/></svg>
<span style="top:518.00px;font-size:17.7px;line-height:17.7px;color:#000;font-weight:bold;letter-spacing:-1.598px;left:110.30px;">7...</span>
<span style="top:518.00px;font-size:17.7px;line-height:17.7px;color:#000;font-weight:bold;letter-spacing:0.106px;left:138.10px;">Апт №046 г.Бровары, ул.Гагарина,14</span>
<span style="top:518.00px;font-size:17.7px;line-height:17.7px;color:#000;font-weight:bold;letter-spacing:0.591px;left:748.70px;">54289</span>
<span style="top:518.00px;font-size:17.7px;line-height:17.7px;color:#000;font-weight:bold;letter-spacing:0.607px;left:867.40px;">5232</span>
<svg style="left:1118.70px;top:515.30px" width="20" height="20"><use href="#cb1" width="20" height="20"/></svg>
<span style="top:518.00px;font-size:17.7px;line-height:17.7px;color:#000;font-weight:bold;letter-spacing:0.204px;left:1213.60px;">Апт №046 г.Б...</span>
<svg style="left:49.10px;top:543.80px" width="20" height="20"><use href="#cb0" width="20" height="20"/></svg>
<span style="top:547.00px;font-size:17.7px;line-height:17.7px;color:#000;font-weight:bold;letter-spacing:-1.598px;left:110.30px;">7...</span>
<span style="top:547.00px;font-size:17.7px;line-height:17.7px;color:#000;font-weight:bold;letter-spacing:0.236px;left:138.10px;">Апт №048 г.Киев, ул.Березняковская,36ж</span>
<span style="top:547.00px;font-size:17.7px;line-height:17.7px;color:#000;font-weight:bold;letter-spacing:0.591px;left:748.70px;">55075</span>
<span style="top:547.00px;font-size:17.7px;line-height:17.7px;color:#000;font-weight:bold;letter-spacing:0.607px;left:867.40px;">5256</span>
<svg style="left:1118.70px;top:543.80px" width="20" height="20"><use href="#cb1" width="20" height="20"/></svg>
<span style="top:547.00px;font-size:17.7px;line-height:17.7px;color:#000;font-weight:bold;letter-spacing:0.340px;left:1213.60px;">Апт №048 г.К...</span>
<svg style="left:49.10px;top:572.30px" width="20" height="20"><use href="#cb0" width="20" height="20"/></svg>
<span style="top:575.00px;font-size:17.7px;line-height:17.7px;color:#000;font-weight:bold;letter-spacing:-1.598px;left:110.30px;">7...</span>
<span style="top:575.00px;font-size:17.7px;line-height:17.7px;color:#000;font-weight:bold;letter-spacing:0.086px;left:138.10px;">Апт №051 г.Киев, ул.Р.Роллана,7а</span>
<span style="top:575.00px;font-size:17.7px;line-height:17.7px;color:#000;font-weight:bold;letter-spacing:0.591px;left:748.70px;">57998</span>
<span style="top:575.00px;font-size:17.7px;line-height:17.7px;color:#000;font-weight:bold;letter-spacing:0.607px;left:867.40px;">4436</span>
<svg style="left:1118.70px;top:572.30px" width="20" height="20"><use href="#cb1" width="20" height="20"/></svg>
<span style="top:575.00px;font-size:17.7px;line-height:17.7px;color:#000;font-weight:bold;letter-spacing:0.340px;left:1213.60px;">Апт №051 г.К...</span>
<svg style="left:49.10px;top:600.80px" width="20" height="20"><use href="#cb0" width="20" height="20"/></svg>
<span style="top:604.00px;font-size:17.7px;line-height:17.7px;color:#000;font-weight:bold;letter-spacing:-1.598px;left:110.30px;">7...</span>
<span style="top:604.00px;font-size:17.7px;line-height:17.7px;color:#000;font-weight:bold;letter-spacing:0.166px;left:138.10px;">Апт №059 г.Киев,ул.Мазепы,9</span>
<span style="top:604.00px;font-size:17.7px;line-height:17.7px;color:#000;font-weight:bold;letter-spacing:0.591px;left:748.70px;">60518</span>
<span style="top:604.00px;font-size:17.7px;line-height:17.7px;color:#000;font-weight:bold;letter-spacing:0.607px;left:867.40px;">5258</span>
<svg style="left:1118.70px;top:600.80px" width="20" height="20"><use href="#cb1" width="20" height="20"/></svg>
<span style="top:604.00px;font-size:17.7px;line-height:17.7px;color:#000;font-weight:bold;letter-spacing:0.340px;left:1213.60px;">Апт №059 г.К...</span>
<svg style="left:49.10px;top:629.30px" width="20" height="20"><use href="#cb0" width="20" height="20"/></svg>
<span style="top:632.00px;font-size:17.7px;line-height:17.7px;color:#000;font-weight:bold;letter-spacing:-1.598px;left:110.30px;">7...</span>
<span style="top:632.00px;font-size:17.7px;line-height:17.7px;color:#000;font-weight:bold;letter-spacing:0.436px;left:138.10px;">Апт №060 г.Киев, пр-т.Победы,49/2</span>
<span style="top:632.00px;font-size:17.7px;line-height:17.7px;color:#000;font-weight:bold;letter-spacing:0.591px;left:748.70px;">60362</span>
<span style="top:632.00px;font-size:17.7px;line-height:17.7px;color:#000;font-weight:bold;letter-spacing:0.607px;left:867.40px;">5259</span>
<svg style="left:1118.70px;top:629.30px" width="20" height="20"><use href="#cb1" width="20" height="20"/></svg>
<span style="top:632.00px;font-size:17.7px;line-height:17.7px;color:#000;font-weight:bold;letter-spacing:0.340px;left:1213.60px;">Апт №060 г.К...</span>
<svg style="left:49.10px;top:657.80px" width="20" height="20"><use href="#cb0" width="20" height="20"/></svg>
<span style="top:661.00px;font-size:17.7px;line-height:17.7px;color:#000;font-weight:bold;letter-spacing:-1.598px;left:110.30px;">7...</span>
<span style="top:661.00px;font-size:17.7px;line-height:17.7px;color:#000;font-weight:bold;letter-spacing:0.150px;left:138.10px;">Апт №062 г.Киев, ул.Вышгородская,44б</span>
<span style="top:661.00px;font-size:17.7px;line-height:17.7px;color:#000;font-weight:bold;letter-spacing:0.591px;left:748.70px;">61565</span>
<span style="top:661.00px;font-size:17.7px;line-height:17.7px;color:#000;font-weight:bold;letter-spacing:0.607px;left:867.40px;">5260</span>
<svg style="left:1118.70px;top:657.80px" width="20" height="20"><use href="#cb1" width="20" height="20"/></svg>
<span style="top:661.00px;font-size:17.7px;line-height:17.7px;color:#000;font-weight:bold;letter-spacing:0.340px;left:1213.60px;">Апт №062 г.К...</span>
<svg style="left:49.10px;top:686.30px" width="20" height="20"><use href="#cb0" width="20" height="20"/></svg>
<span style="top:689.00px;font-size:17.7px;line-height:17.7px;color:#000;font-weight:bold;letter-spacing:-1.598px;left:110.30px;">7...</span>
<span style="top:689.00px;font-size:17.7px;line-height:17.7px;color:#000;font-weight:bold;letter-spacing:-0.060px;left:138.10px;">Апт №065 г.Борисполь, ул.Киевский шлях,2/14</span>
<span style="top:689.00px;font-size:17.7px;line-height:17.7px;color:#000;font-weight:bold;letter-spacing:0.591px;left:748.70px;">64776</span>
<span style="top:689.00px;font-size:17.7px;line-height:17.7px;color:#000;font-weight:bold;letter-spacing:0.607px;left:867.40px;">5244</span>
<svg style="left:1118.70px;top:686.30px" width="20" height="20"><use href="#cb1" width="20" height="20"/></svg>
<span style="top:689.00px;font-size:17.7px;line-height:17.7px;color:#000;font-weight:bold;letter-spacing:0.204px;left:1213.60px;">Апт №065 г.Б...</span>
<svg style="left:49.10px;top:714.80px" width="20" height="20"><use href="#cb0" width="20" height="20"/></svg>
<span style="top:718.00px;font-size:17.7px;line-height:17.7px;color:#000;font-weight:bold;letter-spacing:-1.598px;left:110.30px;">7...</span>
<span style="top:718.00px;font-size:17.7px;line-height:17.7px;color:#000;font-weight:bold;letter-spacing:0.186px;left:138.10px;">Апт №070 г.Мариуполь, пр-т.Ленина,90</span>
<span style="top:718.00px;font-size:17.7px;line-height:17.7px;color:#000;font-weight:bold;letter-spacing:0.591px;left:748.70px;">64415</span>
<span style="top:718.00px;font-size:17.7px;line-height:17.7px;color:#000;font-weight:bold;letter-spacing:0.607px;left:867.40px;">4726</span>
<svg style="left:1118.70px;top:714.80px" width="20" height="20"><use href="#cb1" width="20" height="20"/></svg>
<span style="top:718.00px;font-size:17.7px;line-height:17.7px;color:#000;font-weight:bold;letter-spacing:0.328px;left:1213.60px;">Апт №070 г....</span>
<svg style="left:49.10px;top:743.30px" width="20" height="20"><use href="#cb0" width="20" height="20"/></svg>
<span style="top:746.00px;font-size:17.7px;line-height:17.7px;color:#000;font-weight:bold;letter-spacing:-1.598px;left:110.30px;">7...</span>
<span style="top:746.00px;font-size:17.7px;line-height:17.7px;color:#000;font-weight:bold;letter-spacing:0.334px;left:138.10px;">Апт №073 г.Мариуполь, пр-т.Металлургов,112</span>
<span style="top:746.00px;font-size:17.7px;line-height:17.7px;color:#000;font-weight:bold;letter-spacing:0.591px;left:748.70px;">65609</span>
<span style="top:746.00px;font-size:17.7px;line-height:17.7px;color:#000;font-weight:bold;letter-spacing:0.607px;left:867.40px;">5278</span>
<svg style="left:1118.70px;top:743.30px" width="20" height="20"><use href="#cb1" width="20" height="20"/></svg>
<span style="top:746.00px;font-size:17.7px;line-height:17.7px;color:#000;font-weight:bold;letter-spacing:0.328px;left:1213.60px;">Апт №073 г....</span>
<svg style="left:49.10px;top:771.80px" width="20" height="20"><use href="#cb0" width="20" height="20"/></svg>
<span style="top:775.00px;font-size:17.7px;line-height:17.7px;color:#000;font-weight:bold;letter-spacing:-1.598px;left:110.30px;">7...</span>
<span style="top:775.00px;font-size:17.7px;line-height:17.7px;color:#000;font-weight:bold;letter-spacing:-0.052px;left:138.10px;">Апт №074 г.П-Хмельницкий, ул.Б.Хмельницкого,104</span>
<span style="top:775.00px;font-size:17.7px;line-height:17.7px;color:#000;font-weight:bold;letter-spacing:0.607px;left:867.40px;">4885</span>
<svg style="left:1118.70px;top:771.80px" width="20" height="20"><use href="#cb1" width="20" height="20"/></svg>
<span style="top:775.00px;font-size:17.7px;line-height:17.7px;color:#000;font-weight:bold;letter-spacing:0.322px;left:1213.60px;">Аптека №74 ...</span>
<svg style="left:49.10px;top:800.30px" width="20" height="20"><use href="#cb0" width="20" height="20"/></svg>
<span style="top:803.00px;font-size:17.7px;line-height:17.7px;color:#000;font-weight:bold;letter-spacing:-1.598px;left:110.30px;">7...</span>
<span style="top:803.00px;font-size:17.7px;line-height:17.7px;color:#000;font-weight:bold;letter-spacing:0.265px;left:138.10px;">Апт №075 г.Обухов, ул.Киевская,1/8</span>
<span style="top:803.00px;font-size:17.7px;line-height:17.7px;color:#000;font-weight:bold;letter-spacing:0.591px;left:748.70px;">67604</span>
<span style="top:803.00px;font-size:17.7px;line-height:17.7px;color:#000;font-weight:bold;letter-spacing:0.607px;left:867.40px;">5281</span>
<svg style="left:1118.70px;top:800.30px" width="20" height="20"><use href="#cb1" width="20" height="20"/></svg>
<span style="top:803.00px;font-size:17.7px;line-height:17.7px;color:#000;font-weight:bold;letter-spacing:0.328px;left:1213.60px;">Апт №075 г....</span>
<svg style="left:49.10px;top:828.80px" width="20" height="20"><use href="#cb0" width="20" height="20"/></svg>
<span style="top:832.00px;font-size:17.7px;line-height:17.7px;color:#000;font-weight:bold;letter-spacing:-1.598px;left:110.30px;">7...</span>
<span style="top:832.00px;font-size:17.7px;line-height:17.7px;color:#000;font-weight:bold;letter-spacing:0.213px;left:138.10px;">Апт №076 г.Украинка, ул.Юности,1б</span>
<span style="top:832.00px;font-size:17.7px;line-height:17.7px;color:#000;font-weight:bold;letter-spacing:0.591px;left:748.70px;">67603</span>
<span style="top:832.00px;font-size:17.7px;line-height:17.7px;color:#000;font-weight:bold;letter-spacing:0.607px;left:867.40px;">4904</span>
<svg style="left:1118.70px;top:828.80px" width="20" height="20"><use href="#cb1" width="20" height="20"/></svg>
<span style="top:832.00px;font-size:17.7px;line-height:17.7px;color:#000;font-weight:bold;letter-spacing:0.328px;left:1213.60px;">Апт №076 г....</span>
<svg style="left:49.10px;top:857.30px" width="20" height="20"><use href="#cb0" width="20" height="20"/></svg>
<span style="top:860.00px;font-size:17.7px;line-height:17.7px;color:#000;font-weight:bold;letter-spacing:-1.598px;left:110.30px;">7...</span>
<span style="top:860.00px;font-size:17.7px;line-height:17.7px;color:#000;font-weight:bold;letter-spacing:0.100px;left:138.10px;">Апт №078 г.Киев, пер.Политехнический,1/3</span>
<span style="top:860.00px;font-size:17.7px;line-height:17.7px;color:#000;font-weight:bold;letter-spacing:0.591px;left:748.70px;">67924</span>
<span style="top:860.00px;font-size:17.7px;line-height:17.7px;color:#000;font-weight:bold;letter-spacing:0.607px;left:867.40px;">5261</span>
<svg style="left:1118.70px;top:857.30px" width="20" height="20"><use href="#cb1" width="20" height="20"/></svg>
<span style="top:860.00px;font-size:17.7px;line-height:17.7px;color:#000;font-weight:bold;letter-spacing:0.340px;left:1213.60px;">Апт №078 г.К...</span>
<svg style="left:49.10px;top:885.80px" width="20" height="20"><use href="#cb0" width="20" height="20"/></svg>
<span style="top:889.00px;font-size:17.7px;line-height:17.7px;color:#000;font-weight:bold;letter-spacing:-1.598px;left:110.30px;">7...</span>
<span style="top:889.00px;font-size:17.7px;line-height:17.7px;color:#000;font-weight:bold;letter-spacing:0.106px;left:138.10px;">Апт №079 г.Мироновка, ул.Ленина,61а</span>
<span style="top:889.00px;font-size:17.7px;line-height:17.7px;color:#000;font-weight:bold;letter-spacing:0.591px;left:748.70px;">68560</span>
<span style="top:889.00px;font-size:17.7px;line-height:17.7px;color:#000;font-weight:bold;letter-spacing:0.607px;left:867.40px;">5280</span>
<svg style="left:1118.70px;top:885.80px" width="20" height="20"><use href="#cb1" width="20" height="20"/></svg>
<span style="top:889.00px;font-size:17.7px;line-height:17.7px;color:#000;font-weight:bold;letter-spacing:0.328px;left:1213.60px;">Апт №079 г....</span>
<svg style="left:49.10px;top:914.30px" width="20" height="20"><use href="#cb0" width="20" height="20"/></svg>
<span style="top:917.00px;font-size:17.7px;line-height:17.7px;color:#000;font-weight:bold;letter-spacing:-1.598px;left:110.30px;">7...</span>
<span style="top:917.00px;font-size:17.7px;line-height:17.7px;color:#000;font-weight:bold;letter-spacing:0.174px;left:138.10px;">Апт №087 г.Обухов ул.Киевская,166</span>
<span style="top:917.00px;font-size:17.7px;line-height:17.7px;color:#000;font-weight:bold;letter-spacing:0.607px;left:867.40px;">5164</span>
<svg style="left:1118.70px;top:914.30px" width="20" height="20"><use href="#cb1" width="20" height="20"/></svg>
<span style="top:917.00px;font-size:17.7px;line-height:17.7px;color:#000;font-weight:bold;letter-spacing:0.322px;left:1213.60px;">Аптека №87 ...</span>
<svg style="left:49.10px;top:942.80px" width="20" height="20"><use href="#cb0" width="20" height="20"/></svg>
<span style="top:946.00px;font-size:17.7px;line-height:17.7px;color:#000;font-weight:bold;letter-spacing:-1.598px;left:110.30px;">7...</span>
<span style="top:946.00px;font-size:17.7px;line-height:17.7px;color:#000;font-weight:bold;letter-spacing:0.301px;left:138.10px;">Апт №09 г.Киев, ул.Баггаутовская,1(терапия)</span>
<span style="top:946.00px;font-size:17.7px;line-height:17.7px;color:#000;font-weight:bold;letter-spacing:0.607px;left:867.40px;">2786</span>
<svg style="left:1118.70px;top:942.80px" width="20" height="20"><use href="#cb1" width="20" height="20"/></svg>
<span style="top:946.00px;font-size:17.7px;line-height:17.7px;color:#000;font-weight:bold;letter-spacing:0.158px;left:1213.60px;">ул.Баггаутов...</span>
<svg style="left:49.10px;top:971.30px" width="20" height="20"><use href="#cb0" width="20" height="20"/></svg>
<span style="top:974.00px;font-size:17.7px;line-height:17.7px;color:#000;font-weight:bold;letter-spacing:-1.598px;left:110.30px;">7...</span>
<span style="top:974.00px;font-size:17.7px;line-height:17.7px;color:#000;font-weight:bold;letter-spacing:0.137px;left:138.10px;">Апт №090 г.Киев, ул.Липовская,7/1</span>
<span style="top:974.00px;font-size:17.7px;line-height:17.7px;color:#000;font-weight:bold;letter-spacing:0.591px;left:748.70px;">72790</span>
<span style="top:974.00px;font-size:17.7px;line-height:17.7px;color:#000;font-weight:bold;letter-spacing:0.607px;left:867.40px;">5262</span>
<svg style="left:1118.70px;top:971.30px" width="20" height="20"><use href="#cb1" width="20" height="20"/></svg>
<span style="top:974.00px;font-size:17.7px;line-height:17.7px;color:#000;font-weight:bold;letter-spacing:0.340px;left:1213.60px;">Апт №090 г.К...</span>
</div>
<svg style="left:564.40px;top:302.50px" width="9" height="14" viewBox="0 0 9 14"><path d="M0.2 0.2 L8.4 7 L0.2 13.8 Z" fill="#000"/></svg>
<div style="left:558.20px;top:1249.40px;width:1576.30px;height:2.20px;background:#a0a0a0;"></div>
<div style="left:558.20px;top:1251.60px;width:1576.30px;height:32.00px;background:#f0f0f0;"></div>
<div style="left:558.20px;top:1283.40px;width:1576.30px;height:1.40px;background:#c2c2c2;"></div>
<div style="left:574.20px;top:1251.60px;width:1.30px;height:32.00px;background:#b8b8b8;"></div>
<div style="left:578.80px;top:1254.20px;width:81.40px;height:26.60px;background:#e4e8ea;border:1.3px solid #cfd3d6;"></div>
<span style="top:1260.00px;font-size:17.7px;line-height:17.7px;color:#000;font-weight:bold;left:256.00px;width:400px;text-align:right;">0</span>
<div style="left:694.40px;top:1254.20px;width:607.20px;height:26.60px;background:#e4e8ea;border:1.3px solid #cfd3d6;"></div>
<span style="top:1260.00px;font-size:17.7px;line-height:17.7px;color:#000;font-weight:bold;letter-spacing:-0.162px;left:698.60px;">Запис 2 із 151</span>
<div style="left:558.20px;top:1286.00px;width:1576.30px;height:24.00px;background:#f0f0f0;"></div>
<div style="left:584.00px;top:1287.40px;width:1421.00px;height:21.00px;background:#cdcdcd;"></div>
<svg style="left:565px;top:1291px" width="10" height="14" viewBox="0 0 10 14"><path d="M7.2 1.8 L2.2 7 L7.2 12.2" fill="none" stroke="#5e5e5e" stroke-width="2.9"/></svg>
<svg style="left:2117px;top:1291px" width="10" height="14" viewBox="0 0 10 14"><path d="M2.8 1.8 L7.8 7 L2.8 12.2" fill="none" stroke="#5e5e5e" stroke-width="2.9"/></svg>
<div style="left:2135.50px;top:184.80px;width:23.50px;height:1099.50px;background:#f0f0f0;"></div>
<div style="left:2136.00px;top:211.20px;width:22.40px;height:234.80px;background:#cdcdcd;"></div>
<svg style="left:2140.50px;top:194.40px" width="13" height="10" viewBox="0 0 13 10"><path d="M1.6 7.8 L6.5 2.8 L11.4 7.8" fill="none" stroke="#5e5e5e" stroke-width="2.9"/></svg>
<svg style="left:2140.50px;top:1268.00px" width="13" height="10" viewBox="0 0 13 10"><path d="M1.6 1.8 L6.5 6.8 L11.4 1.8" fill="none" stroke="#5e5e5e" stroke-width="2.9"/></svg>
<div style="left:574.2px;top:237px;width:87px;height:1012.4px;border:4px solid #ff0000;border-radius:2.5px"></div>
<svg style="left:0;top:0" width="2159" height="400" viewBox="0 0 2159 400"><polygon points="679.2,86.0 634.4,120.1 589.5,154.2 529.8,199.7 479.0,238.4 425.5,279.7 380.9,314.1 384.8,319.1 429.2,284.5 482.5,242.9 532.6,203.3 591.5,156.7 635.6,121.7 679.8,86.8" fill="#ff0000"/><polygon points="372.6,324.6 381.8,307.9 382.9,316.6 391.3,321.0" fill="#ff0000"/></svg>
</body></html>
